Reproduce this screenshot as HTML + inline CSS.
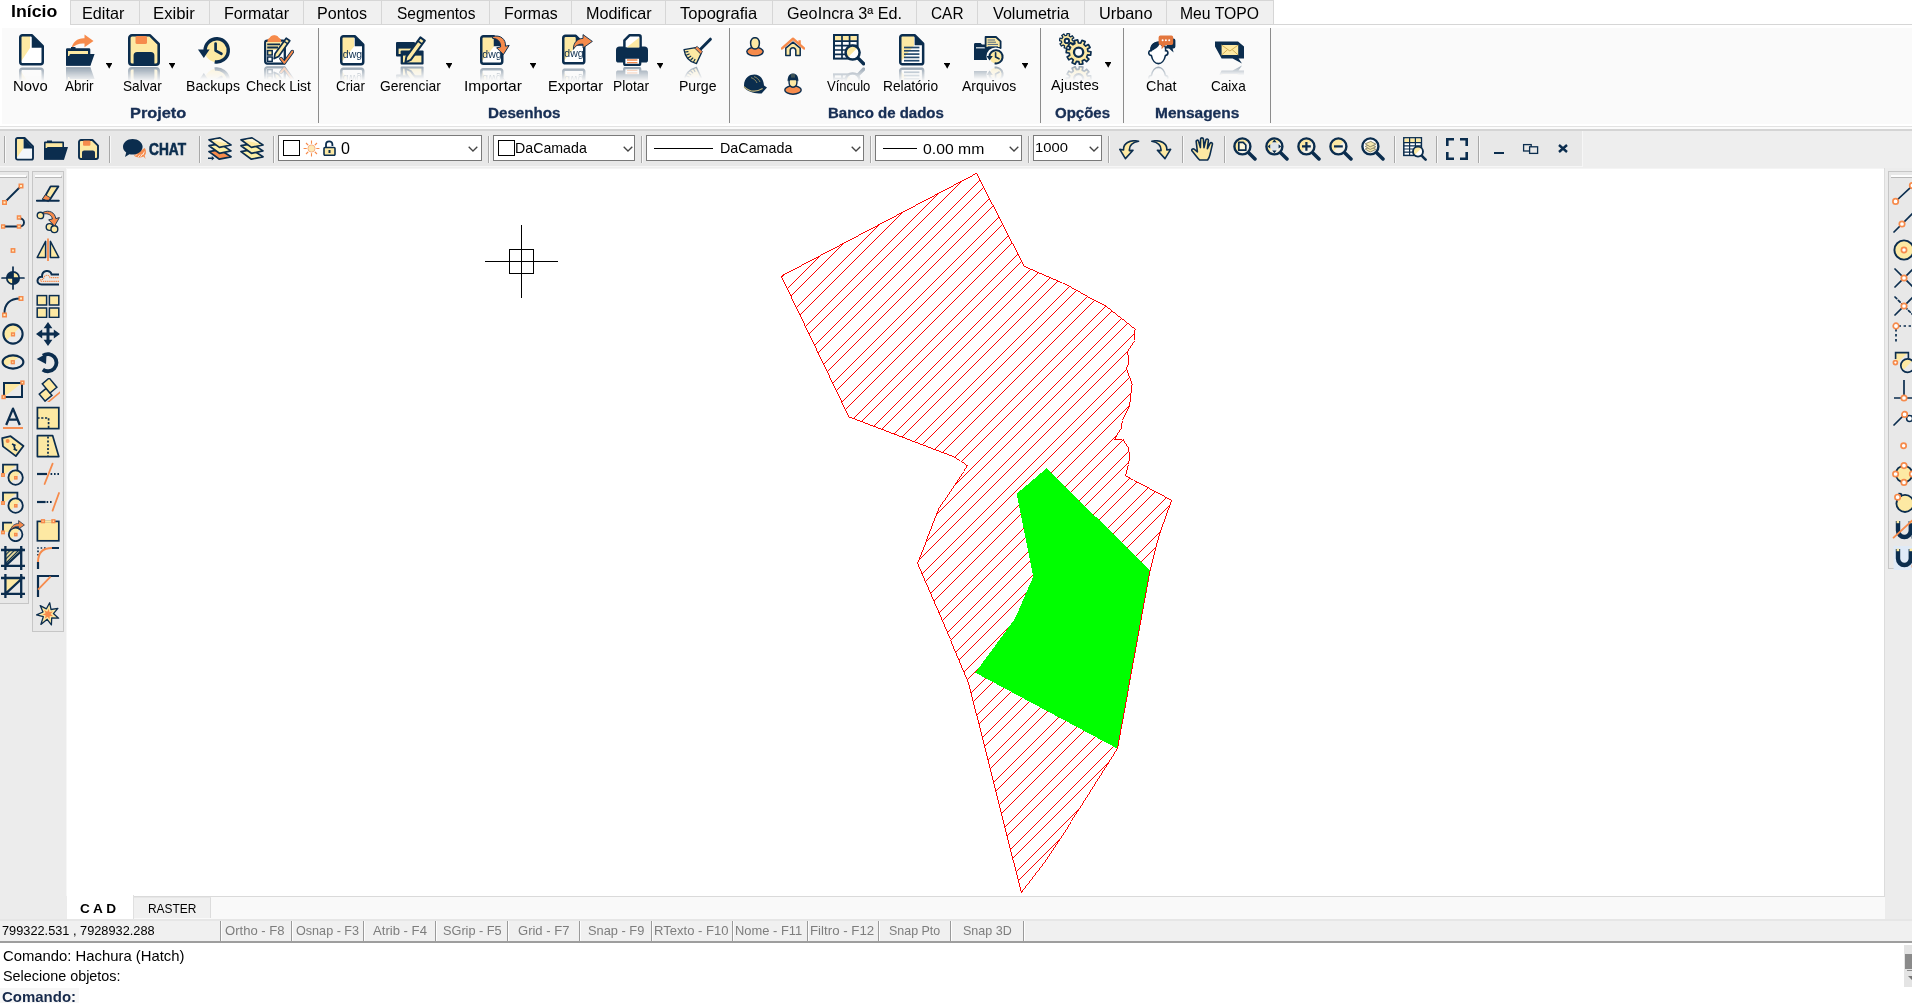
<!DOCTYPE html><html><head><meta charset="utf-8"><title>CAD</title><style>
*{box-sizing:border-box;margin:0;padding:0}
html,body{width:1912px;height:1003px;overflow:hidden;background:#fff}
body{position:relative;font-family:"Liberation Sans",sans-serif;color:#000}
.a{position:absolute}
.tab{position:absolute;top:0;height:25px;background:#f0f0f0;border:1px solid #d6d6d6;border-left:none;font-size:16px;line-height:25px;text-align:center;white-space:nowrap}
.tab span{display:inline-block;transform:scaleX(.95)}
.tab.act{background:#fff;border:none;font-weight:bold;height:27px}
.rib{position:absolute;left:2px;top:28px;width:1910px;height:96px;background:#fafafa}
.gsep{position:absolute;top:28px;width:1px;height:95px;background:#8c8c8c}
.lbl{position:absolute;top:77px;height:17px;line-height:17px;font-size:14px;white-space:nowrap;transform:translateX(-50%)}
.grp{position:absolute;top:103px;height:18px;line-height:18px;font-size:15px;font-weight:bold;color:#1b3358;white-space:nowrap;transform:translateX(-50%)}
.dd{position:absolute;width:7px;height:6px}
.ric{position:absolute;-webkit-box-reflect:below 1px linear-gradient(transparent 55%,rgba(0,0,0,.42))}
.tb{position:absolute;left:0;top:131px;width:1583px;height:36px;background:#e8e8e8;border-right:1px solid #f6f6f6;border-bottom:1px solid #f6f6f6}
.tsep{position:absolute;top:136px;width:2px;height:27px;border-left:1px solid #a8a8a8;border-right:1px solid #f8f8f8}
.cb{position:absolute;top:135px;height:26px;background:#fff;border:1px solid #7a7a7a;font-size:14.5px;line-height:24px;white-space:nowrap}
.chev{position:absolute;top:10px;width:10px;height:6px}
.ltb{position:absolute;background:#e8e8e8;border:1px solid #c6c6c6}
.grip{position:absolute;height:3px;border-top:2px solid #fdfdfd;border-bottom:1px solid #b8b8b8;border-right:1px solid #b8b8b8}
.st{position:absolute;top:921px;height:20px;line-height:20px;font-size:12.8px;color:#7d7d7d;text-align:center;border-left:1px solid #9a9a9a;box-shadow:inset 1px 0 0 #fff;white-space:nowrap}
.cmd{position:absolute;left:4px;font-size:14px;line-height:18px;white-space:nowrap}
</style></head><body>
<div class="tab act" style="left:0;width:70px"></div>
<div class="a" style="left:11.25px;top:1.03px;font-size:15.8px;line-height:21px;font-weight:bold;color:#000;white-space:nowrap;transform:scaleX(1.1221);transform-origin:0 0;">Início</div>
<div class="tab" style="left:70px;width:70px;border-left:1px solid #d6d6d6"></div>
<div class="a" style="left:82.40px;top:2.58px;font-size:16.5px;line-height:21px;color:#000;white-space:nowrap;transform:scaleX(0.9812);transform-origin:0 0;">Editar</div>
<div class="tab" style="left:140px;width:70px"></div>
<div class="a" style="left:153.27px;top:2.58px;font-size:16.5px;line-height:21px;color:#000;white-space:nowrap;transform:scaleX(1.0109);transform-origin:0 0;">Exibir</div>
<div class="tab" style="left:210px;width:94px"></div>
<div class="a" style="left:223.62px;top:2.58px;font-size:16.5px;line-height:21px;color:#000;white-space:nowrap;transform:scaleX(0.9721);transform-origin:0 0;">Formatar</div>
<div class="tab" style="left:304px;width:78px"></div>
<div class="a" style="left:317.41px;top:2.58px;font-size:16.5px;line-height:21px;color:#000;white-space:nowrap;transform:scaleX(0.9737);transform-origin:0 0;">Pontos</div>
<div class="tab" style="left:382px;width:108px"></div>
<div class="a" style="left:396.60px;top:2.58px;font-size:16.5px;line-height:21px;color:#000;white-space:nowrap;transform:scaleX(0.9407);transform-origin:0 0;">Segmentos</div>
<div class="tab" style="left:490px;width:82px"></div>
<div class="a" style="left:503.53px;top:2.58px;font-size:16.5px;line-height:21px;color:#000;white-space:nowrap;transform:scaleX(0.9604);transform-origin:0 0;">Formas</div>
<div class="tab" style="left:572px;width:94px"></div>
<div class="a" style="left:585.50px;top:2.58px;font-size:16.5px;line-height:21px;color:#000;white-space:nowrap;transform:scaleX(0.9813);transform-origin:0 0;">Modificar</div>
<div class="tab" style="left:666px;width:107px"></div>
<div class="a" style="left:680.47px;top:2.58px;font-size:16.5px;line-height:21px;color:#000;white-space:nowrap;transform:scaleX(1.0025);transform-origin:0 0;">Topografia</div>
<div class="tab" style="left:773px;width:144px"></div>
<div class="a" style="left:787.49px;top:2.58px;font-size:16.5px;line-height:21px;color:#000;white-space:nowrap;transform:scaleX(0.9822);transform-origin:0 0;">GeoIncra 3ª Ed.</div>
<div class="tab" style="left:917px;width:61px"></div>
<div class="a" style="left:931.13px;top:2.58px;font-size:16.5px;line-height:21px;color:#000;white-space:nowrap;transform:scaleX(0.9331);transform-origin:0 0;">CAR</div>
<div class="tab" style="left:978px;width:107px"></div>
<div class="a" style="left:993.10px;top:2.58px;font-size:16.5px;line-height:21px;color:#000;white-space:nowrap;transform:scaleX(0.9789);transform-origin:0 0;">Volumetria</div>
<div class="tab" style="left:1085px;width:82px"></div>
<div class="a" style="left:1098.68px;top:2.58px;font-size:16.5px;line-height:21px;color:#000;white-space:nowrap;transform:scaleX(0.9881);transform-origin:0 0;">Urbano</div>
<div class="tab" style="left:1167px;width:107px"></div>
<div class="a" style="left:1180.34px;top:2.58px;font-size:16.5px;line-height:21px;color:#000;white-space:nowrap;transform:scaleX(0.9534);transform-origin:0 0;">Meu TOPO</div>
<div class="a" style="left:70px;top:24px;width:1842px;height:1px;background:#d6d6d6"></div>
<div class="rib"></div>
<div class="a" style="left:12.71px;top:76.58px;font-size:14.2px;line-height:18px;color:#000;white-space:nowrap;transform:scaleX(1.0460);transform-origin:0 0;">Novo</div>
<div class="a" style="left:65.40px;top:76.58px;font-size:14.2px;line-height:18px;color:#000;white-space:nowrap;transform:scaleX(0.9557);transform-origin:0 0;">Abrir</div>
<div class="a" style="left:123.19px;top:76.58px;font-size:14.2px;line-height:18px;color:#000;white-space:nowrap;transform:scaleX(0.9618);transform-origin:0 0;">Salvar</div>
<div class="a" style="left:186.17px;top:76.58px;font-size:14.2px;line-height:18px;color:#000;white-space:nowrap;transform:scaleX(0.9920);transform-origin:0 0;">Backups</div>
<div class="a" style="left:246.40px;top:76.58px;font-size:14.2px;line-height:18px;color:#000;white-space:nowrap;transform:scaleX(0.9797);transform-origin:0 0;">Check List</div>
<div class="a" style="left:336.33px;top:76.58px;font-size:14.2px;line-height:18px;color:#000;white-space:nowrap;transform:scaleX(0.9434);transform-origin:0 0;">Criar</div>
<div class="a" style="left:380.31px;top:76.58px;font-size:14.2px;line-height:18px;color:#000;white-space:nowrap;transform:scaleX(0.9758);transform-origin:0 0;">Gerenciar</div>
<div class="a" style="left:464.30px;top:76.58px;font-size:14.2px;line-height:18px;color:#000;white-space:nowrap;transform:scaleX(1.0952);transform-origin:0 0;">Importar</div>
<div class="a" style="left:548.03px;top:76.58px;font-size:14.2px;line-height:18px;color:#000;white-space:nowrap;transform:scaleX(1.0262);transform-origin:0 0;">Exportar</div>
<div class="a" style="left:613.00px;top:76.58px;font-size:14.2px;line-height:18px;color:#000;white-space:nowrap;transform:scaleX(0.9725);transform-origin:0 0;">Plotar</div>
<div class="a" style="left:678.87px;top:76.58px;font-size:14.2px;line-height:18px;color:#000;white-space:nowrap;transform:scaleX(0.9906);transform-origin:0 0;">Purge</div>
<div class="a" style="left:826.80px;top:76.58px;font-size:14.2px;line-height:18px;color:#000;white-space:nowrap;transform:scaleX(0.9147);transform-origin:0 0;">Vínculo</div>
<div class="a" style="left:883.00px;top:76.58px;font-size:14.2px;line-height:18px;color:#000;white-space:nowrap;transform:scaleX(0.9692);transform-origin:0 0;">Relatório</div>
<div class="a" style="left:962.00px;top:76.58px;font-size:14.2px;line-height:18px;color:#000;white-space:nowrap;transform:scaleX(0.9846);transform-origin:0 0;">Arquivos</div>
<div class="a" style="left:1050.70px;top:75.58px;font-size:14.2px;line-height:18px;color:#000;white-space:nowrap;transform:scaleX(1.0265);transform-origin:0 0;">Ajustes</div>
<div class="a" style="left:1146.08px;top:76.58px;font-size:14.2px;line-height:18px;color:#000;white-space:nowrap;transform:scaleX(1.0153);transform-origin:0 0;">Chat</div>
<div class="a" style="left:1211.32px;top:76.58px;font-size:14.2px;line-height:18px;color:#000;white-space:nowrap;transform:scaleX(0.9567);transform-origin:0 0;">Caixa</div>
<div class="a" style="left:130.44px;top:103.75px;font-size:14px;line-height:18px;font-weight:bold;color:#182f55;white-space:nowrap;transform:scaleX(1.1659);transform-origin:0 0;-webkit-text-stroke:.3px #182f55;">Projeto</div>
<div class="a" style="left:487.71px;top:103.75px;font-size:14px;line-height:18px;font-weight:bold;color:#182f55;white-space:nowrap;transform:scaleX(1.0836);transform-origin:0 0;-webkit-text-stroke:.3px #182f55;">Desenhos</div>
<div class="a" style="left:827.52px;top:103.75px;font-size:14px;line-height:18px;font-weight:bold;color:#182f55;white-space:nowrap;transform:scaleX(1.0717);transform-origin:0 0;-webkit-text-stroke:.3px #182f55;">Banco de dados</div>
<div class="a" style="left:1055.10px;top:103.75px;font-size:14px;line-height:18px;font-weight:bold;color:#182f55;white-space:nowrap;transform:scaleX(1.0724);transform-origin:0 0;-webkit-text-stroke:.3px #182f55;">Opções</div>
<div class="a" style="left:1155.49px;top:103.75px;font-size:14px;line-height:18px;font-weight:bold;color:#182f55;white-space:nowrap;transform:scaleX(1.1052);transform-origin:0 0;-webkit-text-stroke:.3px #182f55;">Mensagens</div>
<div class="gsep" style="left:318px"></div>
<div class="gsep" style="left:729px"></div>
<div class="gsep" style="left:1040px"></div>
<div class="gsep" style="left:1123px"></div>
<div class="gsep" style="left:1270px"></div>
<svg class="a" style="left:105.5px;top:63px" width="6.4" height="5.8" viewBox="0 0 6.4 5.8"><path d="M0 0h6.4v1.2h-.7L3.2 5.7 .7 1.2H0z" fill="#000"/></svg>
<svg class="a" style="left:169px;top:63px" width="6.4" height="5.8" viewBox="0 0 6.4 5.8"><path d="M0 0h6.4v1.2h-.7L3.2 5.7 .7 1.2H0z" fill="#000"/></svg>
<svg class="a" style="left:445.7px;top:63px" width="6.4" height="5.8" viewBox="0 0 6.4 5.8"><path d="M0 0h6.4v1.2h-.7L3.2 5.7 .7 1.2H0z" fill="#000"/></svg>
<svg class="a" style="left:529.7px;top:63px" width="6.4" height="5.8" viewBox="0 0 6.4 5.8"><path d="M0 0h6.4v1.2h-.7L3.2 5.7 .7 1.2H0z" fill="#000"/></svg>
<svg class="a" style="left:656.9px;top:63px" width="6.4" height="5.8" viewBox="0 0 6.4 5.8"><path d="M0 0h6.4v1.2h-.7L3.2 5.7 .7 1.2H0z" fill="#000"/></svg>
<svg class="a" style="left:943.7px;top:63px" width="6.4" height="5.8" viewBox="0 0 6.4 5.8"><path d="M0 0h6.4v1.2h-.7L3.2 5.7 .7 1.2H0z" fill="#000"/></svg>
<svg class="a" style="left:1021.8px;top:63px" width="6.4" height="5.8" viewBox="0 0 6.4 5.8"><path d="M0 0h6.4v1.2h-.7L3.2 5.7 .7 1.2H0z" fill="#000"/></svg>
<svg class="a" style="left:1104.6px;top:62px" width="6.4" height="5.8" viewBox="0 0 6.4 5.8"><path d="M0 0h6.4v1.2h-.7L3.2 5.7 .7 1.2H0z" fill="#000"/></svg>
<svg class="ric" style="left:19px;top:34px" width="25" height="32" viewBox="0 0 25 32"><path d="M3.45 1.25H12.75L23.75 12.25V28.05a2.2 2.2 0 0 1-2.2 2.2H3.45a2.2 2.2 0 0 1-2.2-2.2V3.45a2.2 2.2 0 0 1 2.2-2.2z" fill="#fff"/><path d="M2 2H11V14L2 27.5z" fill="#fde9a3"/><path d="M12.75 1.25L23.75 12.25V13.75H12.75z" fill="#0b2d4e"/><path d="M3.45 1.25H12.75L23.75 12.25V28.05a2.2 2.2 0 0 1-2.2 2.2H3.45a2.2 2.2 0 0 1-2.2-2.2V3.45a2.2 2.2 0 0 1 2.2-2.2z" fill="none" stroke="#0b2d4e" stroke-width="2.5" stroke-linejoin="round"/></svg>
<svg class="ric" style="left:66px;top:34px" width="29" height="32" viewBox="0 0 29 32"><path d="M5.5 14.5C6.5 7.5 12 3.8 18.5 4.2V0.6L27.5 7l-9 6.2V9.6C13.5 9.2 9 10.6 5.5 14.5z" fill="#f68b4c"/><path d="M0 31.5V15.5a1.3 1.3 0 0 1 1.3-1.3H5v-1.3h4.5v1.3H23a1.3 1.3 0 0 1 1.3 1.3V31.5z" fill="#0b2d4e"/><path d="M2 17H22V22H2z" fill="#fde9a3"/><path d="M0 31.7L3.6 20.8a1 1 0 0 1 1-.7H28.6L24.4 31.7z" fill="#0b2d4e"/></svg>
<svg class="ric" style="left:128px;top:34px" width="32" height="32" viewBox="0 0 32 32"><path d="M4 1.3H22L30.7 10V28a2.7 2.7 0 0 1-2.7 2.7H4A2.7 2.7 0 0 1 1.3 28V4A2.7 2.7 0 0 1 4 1.3z" fill="#fde9a3" stroke="#0b2d4e" stroke-width="2.6" stroke-linejoin="round"/><rect x="7.5" y="2" width="11.5" height="8" rx="1.6" fill="#f68b4c"/><path d="M5.6 30.5V21.5a3.6 3.6 0 0 1 3.6-3.6H22.8a3.6 3.6 0 0 1 3.6 3.6V30.5z" fill="#0b2d4e"/></svg>
<svg class="ric" style="left:198px;top:36px" width="33" height="29" viewBox="0 0 33 29"><circle cx="18.7" cy="14.4" r="11.9" fill="#fde9a3"/><path d="M7.1 14.4A11.6 11.6 0 1 1 16.69 25.82" fill="none" stroke="#0b2d4e" stroke-width="3.4"/><path d="M0 13.4H11.6L5.8 22z" fill="#0b2d4e"/><path d="M17.6 7.6V14.6L23.4 17.8" fill="none" stroke="#0b2d4e" stroke-width="2.7" stroke-linecap="round" stroke-linejoin="round"/></svg>
<svg class="ric" style="left:264px;top:35px" width="30" height="30" viewBox="0 0 30 30"><path d="M6 2.6C7.5 -.6 13 -.6 14.5 2.6L17 4.6V8.2H3.6V4.6z" fill="#f68b4c"/><rect x="1.2" y="5.6" width="19.6" height="23" rx="2" fill="#fff" stroke="#0b2d4e" stroke-width="2.3"/><path d="M6 2.8C7.5 -.4 13 -.4 14.5 2.8L17 4.8V7H3.6V4.8z" fill="#f68b4c"/><path d="M2.4 7H19.6V15H2.4z" fill="#fde9a3"/><path d="M3.2 9.3H16M3.2 12.5H14" stroke="#0b2d4e" stroke-width="1.8"/><rect x="3.6" y="15.6" width="4.6" height="4.4" fill="#fde9a3" stroke="#0b2d4e" stroke-width="1.5"/><rect x="3.6" y="22" width="4.6" height="4.4" fill="#fff" stroke="#0b2d4e" stroke-width="1.5"/><path d="M22.2 3.2l3.6 2.6L14.6 21.4 10.2 23.6 11 18.8z" fill="#fde9a3" stroke="#0b2d4e" stroke-width="1.7" stroke-linejoin="round"/><path d="M20.2 6.4l3.4 2.4" stroke="#0b2d4e" stroke-width="1.4"/><path d="M17 23.6l3.4 4.2L28.4 16.6" fill="none" stroke="#0b2d4e" stroke-width="3.6" stroke-linecap="round" stroke-linejoin="round"/><path d="M17 23.6l3.4 4.2L28.4 16.6" fill="none" stroke="#f68b4c" stroke-width="1.9" stroke-linecap="round" stroke-linejoin="round"/></svg>
<svg class="ric" style="left:340px;top:35px" width="25" height="31" viewBox="0 0 25 31"><path d="M3.45 1.25H14.75L23.25 9.75V27.05a2.2 2.2 0 0 1-2.2 2.2H3.45a2.2 2.2 0 0 1-2.2-2.2V3.45a2.2 2.2 0 0 1 2.2-2.2z" fill="#fff"/><path d="M2 2H14V11.5L2 26.5z" fill="#fde9a3"/><path d="M14.75 1.25L23.25 9.75V11.25H14.75z" fill="#0b2d4e"/><path d="M3.45 1.25H14.75L23.25 9.75V27.05a2.2 2.2 0 0 1-2.2 2.2H3.45a2.2 2.2 0 0 1-2.2-2.2V3.45a2.2 2.2 0 0 1 2.2-2.2z" fill="none" stroke="#0b2d4e" stroke-width="2.5" stroke-linejoin="round"/><text x="12.45" y="23.3" text-anchor="middle" font-family="Liberation Sans" font-size="10.5" fill="#0b2d4e" letter-spacing="0">dwg</text></svg>
<svg class="ric" style="left:396px;top:36px" width="30" height="29" viewBox="0 0 30 29"><rect x="0" y="6" width="19" height="14.5" rx="1" fill="#0b2d4e"/><rect x="2.6" y="12.6" width="14" height="5.4" fill="#fde9a3"/><rect x="4.6" y="14.6" width="23" height="14" rx="1" fill="#0b2d4e"/><rect x="7" y="19.6" width="18.4" height="6.8" fill="#fde9a3"/><path d="M24.4 1.4l4.4 3.2L14.8 23.8 9.4 26.4 10.4 20.6z" fill="#fde9a3" stroke="#0b2d4e" stroke-width="2" stroke-linejoin="round"/><path d="M21.8 5l4.4 3.2" stroke="#0b2d4e" stroke-width="1.6"/></svg>
<svg class="ric" style="left:480px;top:34.5px" width="30" height="31" viewBox="0 0 30 31"><path d="M3.45 1.25H13.75L22.25 9.75V26.55a2.2 2.2 0 0 1-2.2 2.2H3.45a2.2 2.2 0 0 1-2.2-2.2V3.45a2.2 2.2 0 0 1 2.2-2.2z" fill="#fff"/><path d="M2 2H14V11.5L2 26z" fill="#fde9a3"/><path d="M13.75 1.25L22.25 9.75V11.25H13.75z" fill="#0b2d4e"/><path d="M3.45 1.25H13.75L22.25 9.75V26.55a2.2 2.2 0 0 1-2.2 2.2H3.45a2.2 2.2 0 0 1-2.2-2.2V3.45a2.2 2.2 0 0 1 2.2-2.2z" fill="none" stroke="#0b2d4e" stroke-width="2.5" stroke-linejoin="round"/><text x="11.95" y="22.8" text-anchor="middle" font-family="Liberation Sans" font-size="10.5" fill="#0b2d4e" letter-spacing="0">dwg</text><path d="M12.6 1.6C20.5 -0.8 26.2 4.6 25.4 11.2L29.2 10.4 23.4 19.6 16.6 12.8 20.6 12C21 6.6 17.4 3.4 12.6 3.4z" fill="#f68b4c" stroke="#0b2d4e" stroke-width="1" stroke-linejoin="round"/></svg>
<svg class="ric" style="left:561.6px;top:34px" width="31" height="32" viewBox="0 0 31 32"><g transform="translate(0 .6)"><path d="M3.45 1.25H13.75L22.25 9.75V26.55a2.2 2.2 0 0 1-2.2 2.2H3.45a2.2 2.2 0 0 1-2.2-2.2V3.45a2.2 2.2 0 0 1 2.2-2.2z" fill="#fff"/><path d="M2 2H14V11.5L2 26z" fill="#fde9a3"/><path d="M13.75 1.25L22.25 9.75V11.25H13.75z" fill="#0b2d4e"/><path d="M3.45 1.25H13.75L22.25 9.75V26.55a2.2 2.2 0 0 1-2.2 2.2H3.45a2.2 2.2 0 0 1-2.2-2.2V3.45a2.2 2.2 0 0 1 2.2-2.2z" fill="none" stroke="#0b2d4e" stroke-width="2.5" stroke-linejoin="round"/><text x="11.95" y="22.8" text-anchor="middle" font-family="Liberation Sans" font-size="10.5" fill="#0b2d4e" letter-spacing="0">dwg</text></g><path d="M11.4 15.4C11.2 8.6 15.4 4.6 21 4.4V.6L30.4 7.4 21 14V10.2C16.6 9.8 13.4 11.6 11.4 15.4z" fill="#f68b4c" stroke="#0b2d4e" stroke-width=".9" stroke-linejoin="round"/></svg>
<svg class="ric" style="left:616px;top:34px" width="32" height="32" viewBox="0 0 32 32"><path d="M3.6 12.6H28.4a3.6 3.6 0 0 1 3.6 3.6V26a2.6 2.6 0 0 1-2.6 2.6H2.6A2.6 2.6 0 0 1 0 26V16.2a3.6 3.6 0 0 1 3.6-3.6z" fill="#0b2d4e"/><path d="M13.4 1.3H23a1.6 1.6 0 0 1 1.6 1.6V14.6H8.4V6.3z" fill="#fff" stroke="#0b2d4e" stroke-width="2.5" stroke-linejoin="round"/><path d="M23.2 3.4V13.6H10.6z" fill="#fde9a3"/><rect x="8.2" y="23.6" width="16" height="7.4" rx="1.2" fill="#fff" stroke="#0b2d4e" stroke-width="2.3"/><path d="M11 26H21.4M11 28.6H21.4" stroke="#f68b4c" stroke-width="1.3"/></svg>
<svg class="ric" style="left:683px;top:37px" width="30" height="28" viewBox="0 0 30 28"><path d="M27.4 2.2L17 12.8" stroke="#0b2d4e" stroke-width="3" stroke-linecap="round"/><path d="M12.6 10.6L1 12.6C2 19.8 6.6 25 13.4 26.6L18.2 16.4z" fill="#fde9a3" stroke="#0b2d4e" stroke-width="1.3" stroke-linejoin="round"/><path d="M2.4 15l2.6-.4M3.6 18l2.6-1M5.4 20.8l2.4-1.6M7.8 23l2-2M10.6 24.8l1.4-2.4" stroke="#0b2d4e" stroke-width="1.1" stroke-linecap="round"/><path d="M14.2 9.4L19.4 14.6 17.8 17.2 11.6 11z" fill="#f68b4c" stroke="#0b2d4e" stroke-width=".8" stroke-linejoin="round"/></svg>
<svg class="a" style="left:746px;top:36.6px" width="18" height="20" viewBox="0 0 18 20"><ellipse cx="9" cy="14.6" rx="8.2" ry="4.3" fill="#f68b4c" stroke="#0b2d4e" stroke-width="1.4"/><path d="M4.6 6.2C4.6 -1.2 13.4 -1.2 13.4 6.2C13.4 9.6 11.6 12 9 12S4.6 9.600000000000001 4.6 6.2z" fill="#fde9a3" stroke="#0b2d4e" stroke-width="1.5"/></svg>
<svg class="a" style="left:781px;top:36.6px" width="24" height="20" viewBox="0 0 24 20"><path d="M17.4 3.2h2.4v4.6l-2.4-2z" fill="#f68b4c"/><path d="M1 11.4L12 1.8 23 11.4" fill="none" stroke="#f68b4c" stroke-width="2.5" stroke-linecap="round" stroke-linejoin="round"/><path d="M4.8 18.4V11.2L12 5.2l7.2 6V18.400000000000002H14.8V13.6a2.8 2.8 0 0 0-5.6 0V18.4z" fill="#fde9a3" stroke="#0b2d4e" stroke-width="1.5" stroke-linejoin="round"/></svg>
<svg class="a" style="left:743px;top:73.6px" width="25" height="20" viewBox="0 0 25 20"><path d="M1 11.6C1 3.6 7 .6 11.4 .6 17.6 .6 20.6 5.6 21 11.6L24 13.6 18.6 19.400000000000002C11.6 20.2 4.6 17.6 1 13.6z" fill="#0b2d4e"/><path d="M1 12.6C6 17.6 13 18.400000000000002 19.6 14.6" fill="none" stroke="#c9b97d" stroke-width="1.2"/><path d="M8 3.6C11 4.6 13 6.6 14 9M11 2.6C14 3.6 16 5.6 17 8" fill="none" stroke="#8c8a64" stroke-width="1"/></svg>
<svg class="a" style="left:784px;top:73px" width="18" height="22" viewBox="0 0 18 22"><ellipse cx="9" cy="17" rx="8.2" ry="4.2" fill="#f68b4c" stroke="#0b2d4e" stroke-width="1.4"/><path d="M5 8.6C5 4.6 13 4.6 13 8.6C13 12 11.4 14.2 9 14.2S5 12 5 8.6z" fill="#fde9a3" stroke="#0b2d4e" stroke-width="1.4"/><path d="M3.6 8.2C3.6 2.8 6 .6 9 .6S14.4 2.8 14.4 8.2L12.4 7.2H5.6z" fill="#0b2d4e"/><path d="M8 1v3.6M10 1v3.6" stroke="#8c8a64" stroke-width=".8"/></svg>
<svg class="ric" style="left:833px;top:34px" width="32" height="32" viewBox="0 0 32 32"><rect x="1" y="1" width="23.6" height="23.6" fill="#fff" stroke="#0b2d4e" stroke-width="2"/><rect x="2" y="2" width="21.6" height="4.6" fill="#fde9a3"/><path d="M1 7.2H24.6M1 11.6H24.6M1 16H24.6M1 20.4H24.6" stroke="#0b2d4e" stroke-width="1.7"/><path d="M9 1V24.6M16.6 1V24.6" stroke="#0b2d4e" stroke-width="1.7"/><path d="M24.6 23.6L30.6 29.8" stroke="#0b2d4e" stroke-width="3.4" stroke-linecap="round"/><circle cx="19.6" cy="18.6" r="7" fill="#fff"/><path d="M12.6 18.6A7 7 0 0 1 24.55 13.65L14.65 23.55A7 7 0 0 1 12.6 18.6z" fill="#fde9a3"/><circle cx="19.6" cy="18.6" r="7" fill="none" stroke="#0b2d4e" stroke-width="2.5"/></svg>
<svg class="ric" style="left:899px;top:34px" width="26" height="32" viewBox="0 0 26 32"><path d="M3.45 1.25H15.649999999999999L24.15 9.75V28.150000000000002a2.2 2.2 0 0 1-2.2 2.2H3.45a2.2 2.2 0 0 1-2.2-2.2V3.45a2.2 2.2 0 0 1 2.2-2.2z" fill="#fff"/><path d="M2 2H15V11.5L2 27.6z" fill="#fde9a3"/><path d="M5 13.5H20.4" stroke="#244a6e" stroke-width="1.7"/><path d="M5 16.8H20.4" stroke="#244a6e" stroke-width="1.7"/><path d="M5 20.1H20.4" stroke="#244a6e" stroke-width="1.7"/><path d="M5 23.4H20.4" stroke="#244a6e" stroke-width="1.7"/><path d="M5 26.7H20.4" stroke="#244a6e" stroke-width="1.7"/><path d="M15.649999999999999 1.25L24.15 9.75V11.25H15.649999999999999z" fill="#0b2d4e"/><path d="M3.45 1.25H15.649999999999999L24.15 9.75V28.150000000000002a2.2 2.2 0 0 1-2.2 2.2H3.45a2.2 2.2 0 0 1-2.2-2.2V3.45a2.2 2.2 0 0 1 2.2-2.2z" fill="none" stroke="#0b2d4e" stroke-width="2.5" stroke-linejoin="round"/></svg>
<svg class="ric" style="left:974px;top:35.6px" width="30" height="29" viewBox="0 0 30 29"><path d="M0 24V8.4a1.4 1.4 0 0 1 1.4-1.4H6.6L8 8.6H19.6V24z" fill="#0b2d4e"/><path d="M2 11.2H14V12.4H2z" fill="#e9eef3"/><path d="M11.6 1H22L26.6 5.4V12H11.6z" fill="#fde9a3" stroke="#0b2d4e" stroke-width="1.8" stroke-linejoin="round"/><path d="M13.6 4H21M13.6 6.2H22M13.600000000000001 8.4H24M13.6 10.6H24" stroke="#4b6582" stroke-width="1"/><circle cx="21.6" cy="20.6" r="9.2" fill="#fafafa"/><circle cx="22" cy="20.8" r="6.6" fill="#fde9a3"/><path d="M15.4 20.8A6.6 6.6 0 1 1 20.6 27.25" fill="none" stroke="#0b2d4e" stroke-width="2"/><path d="M12.4 20H18.8L15.6 24.6z" fill="#0b2d4e"/><path d="M21.6 16.8V21L25 22.8" fill="none" stroke="#0b2d4e" stroke-width="1.6" stroke-linecap="round"/></svg>
<svg class="ric" style="left:1058.6px;top:32.6px" width="33" height="32" viewBox="0 0 33 32"><path d="M15.40 8.10L14.88 10.63L12.89 10.22L11.93 11.65L13.06 13.35L10.91 14.77L9.78 13.07L8.10 13.40L7.70 15.40L5.17 14.88L5.58 12.89L4.15 11.93L2.45 13.06L1.03 10.91L2.73 9.78L2.40 8.10L0.40 7.70L0.92 5.17L2.91 5.58L3.87 4.15L2.74 2.45L4.89 1.03L6.02 2.73L7.70 2.40L8.10 0.40L10.63 0.92L10.22 2.91L11.65 3.87L13.35 2.74L14.77 4.89L13.07 6.02L13.40 7.70z" fill="#fde9a3" stroke="#0b2d4e" stroke-width="1.3" stroke-linejoin="round"/><circle cx="7.9" cy="7.9" r="2.2" fill="#fafafa" stroke="#0b2d4e" stroke-width="1.9"/><path d="M31.99 18.73L31.65 22.13L28.61 21.87L27.66 24.03L29.90 26.10L27.63 28.65L25.32 26.66L23.28 27.85L23.88 30.84L20.54 31.56L19.84 28.60L17.50 28.36L16.22 31.13L13.09 29.76L14.27 26.94L12.51 25.38L9.85 26.87L8.13 23.92L10.74 22.33L10.24 20.03L7.21 19.67L7.55 16.27L10.59 16.53L11.54 14.37L9.30 12.30L11.57 9.75L13.88 11.74L15.92 10.55L15.32 7.56L18.66 6.84L19.36 9.80L21.70 10.04L22.98 7.27L26.11 8.64L24.93 11.46L26.69 13.02L29.35 11.53L31.07 14.48L28.46 16.07L28.96 18.37z" fill="#fde9a3" stroke="#0b2d4e" stroke-width="1.7" stroke-linejoin="round"/><circle cx="19.6" cy="19.2" r="4.6" fill="#fafafa" stroke="#0b2d4e" stroke-width="2.3"/></svg>
<svg class="ric" style="left:1148px;top:34.6px" width="28" height="30" viewBox="0 0 28 30"><path d="M22.6 3.6H25.4a2 2 0 0 1 2 2V11.6a2 2 0 0 1-2 2H24.6L25.6 17.6 21 13.600000000000001H17z" fill="#0b2d4e"/><path d="M3.4 20.6C-0.6 19.6 0.4 15.6 3 15.6C2.4 9.6 8 6.6 12.4 7.6C15.4 8.2 18 11 17.6 15.6C20.4 15.6 21 19.6 17.4 20.6C16.4 25.6 13.4 28.6 10.4 28.6S4.4 25.6 3.4 20.6z" fill="#fff" stroke="#0b2d4e" stroke-width="1.6"/><path d="M2.6 16.6C1.4 9.6 6.4 6 11.4 6.6C14 7 16.6 8.6 17.6 11.6C14.6 11.6 12.6 10.6 11.6 9C10.6 12 6.6 14.6 2.6 16.6z" fill="#0b2d4e"/><path d="M12.4 .6H23.4a1.8 1.8 0 0 1 1.8 1.8V8.2a1.8 1.8 0 0 1-1.8 1.8H17.6L13.600000000000001 14.2V10H12.4a1.8 1.8 0 0 1-1.8-1.8V2.4A1.8 1.8 0 0 1 12.4 .6z" fill="#e3763d"/><circle cx="14.6" cy="5.3" r="1" fill="#fff"/><circle cx="17.9" cy="5.3" r="1" fill="#fff"/><circle cx="21.2" cy="5.3" r="1" fill="#fff"/></svg>
<svg class="ric" style="left:1215px;top:41px" width="29" height="23" viewBox="0 0 29 23"><path d="M0 .6H23L29 5.6V17.6H23.6L27 22.6 17.6 17.6H6.6L0 5.6z" fill="#0b2d4e"/><rect x="6.6" y="4" width="16.6" height="10" fill="#fde9a3"/><path d="M6.6 4L14.9 10 23.200000000000003 4M6.6 14L12.6 8.6M23.2 14L17.2 8.6" fill="none" stroke="#c9a74e" stroke-width=".9"/></svg>
<div class="a" style="left:0;top:126px;width:1912px;height:1px;background:#e2e2e2"></div>
<div class="a" style="left:0;top:127px;width:1912px;height:2px;background:#fbfbfb"></div>
<div class="a" style="left:0;top:129px;width:1912px;height:2px;background:#d4d4d4"></div>
<div class="a" style="left:0;top:131px;width:1912px;height:38px;background:#eeeeee"></div>
<div class="a" style="left:0;top:168px;width:67px;height:753px;background:#ececec"></div>
<div class="a" style="left:1884px;top:168px;width:28px;height:753px;background:#ececec"></div>
<div class="a" style="left:66px;top:168px;width:1819px;height:1px;background:#f4f4f4"></div>
<div class="a" style="left:66px;top:168px;width:1px;height:728px;background:#f6f6f6"></div>
<div class="a" style="left:1884px;top:168px;width:1px;height:728px;background:#dcdcdc"></div>
<div class="a" style="left:67px;top:896px;width:1818px;height:23px;background:#f9f9f9;border-top:1px solid #dadada"></div>
<div class="a" style="left:67px;top:895px;width:67px;height:24px;background:#fff;border-right:1px solid #e0e0e0"></div>
<div class="a" style="left:134px;top:897px;width:77px;height:21px;background:#f0f0f0;border-right:1px solid #dcdcdc;border-top:1px solid #e6e6e6"></div>
<div class="a" style="left:80.46px;top:901.27px;font-size:12.5px;line-height:16px;font-weight:bold;color:#000;white-space:nowrap;transform:scaleX(1.0895);transform-origin:0 0;">C A D</div>
<div class="a" style="left:148.04px;top:900.63px;font-size:12.6px;line-height:16px;color:#000;white-space:nowrap;transform:scaleX(0.9479);transform-origin:0 0;">RASTER</div>
<div class="a" style="left:0;top:919px;width:1912px;height:2px;background:#e6e6e6"></div>
<div class="a" style="left:0;top:921px;width:1912px;height:20px;background:#f0f0f0"></div>
<div class="a" style="left:0;top:941px;width:1912px;height:2px;background:#9e9e9e"></div>
<div class="a" style="left:2.36px;top:922.83px;font-size:12.6px;line-height:16px;color:#000;white-space:nowrap;transform:scaleX(1.0134);transform-origin:0 0;">799322.531 , 7928932.288</div>
<div class="a" style="left:220px;top:921px;width:2px;height:20px;border-left:1px solid #9a9a9a;border-right:1px solid #fdfdfd"></div>
<div class="a" style="left:291px;top:921px;width:2px;height:20px;border-left:1px solid #9a9a9a;border-right:1px solid #fdfdfd"></div>
<div class="a" style="left:363px;top:921px;width:2px;height:20px;border-left:1px solid #9a9a9a;border-right:1px solid #fdfdfd"></div>
<div class="a" style="left:435px;top:921px;width:2px;height:20px;border-left:1px solid #9a9a9a;border-right:1px solid #fdfdfd"></div>
<div class="a" style="left:507px;top:921px;width:2px;height:20px;border-left:1px solid #9a9a9a;border-right:1px solid #fdfdfd"></div>
<div class="a" style="left:579px;top:921px;width:2px;height:20px;border-left:1px solid #9a9a9a;border-right:1px solid #fdfdfd"></div>
<div class="a" style="left:651px;top:921px;width:2px;height:20px;border-left:1px solid #9a9a9a;border-right:1px solid #fdfdfd"></div>
<div class="a" style="left:732px;top:921px;width:2px;height:20px;border-left:1px solid #9a9a9a;border-right:1px solid #fdfdfd"></div>
<div class="a" style="left:807px;top:921px;width:2px;height:20px;border-left:1px solid #9a9a9a;border-right:1px solid #fdfdfd"></div>
<div class="a" style="left:878px;top:921px;width:2px;height:20px;border-left:1px solid #9a9a9a;border-right:1px solid #fdfdfd"></div>
<div class="a" style="left:950px;top:921px;width:2px;height:20px;border-left:1px solid #9a9a9a;border-right:1px solid #fdfdfd"></div>
<div class="a" style="left:1023px;top:921px;width:2px;height:20px;border-left:1px solid #9a9a9a;border-right:1px solid #fdfdfd"></div>
<div class="a" style="left:225.41px;top:922.83px;font-size:12.6px;line-height:16px;color:#7d7d7d;white-space:nowrap;transform:scaleX(1.0387);transform-origin:0 0;">Ortho - F8</div>
<div class="a" style="left:295.63px;top:922.83px;font-size:12.6px;line-height:16px;color:#7d7d7d;white-space:nowrap;transform:scaleX(1.0011);transform-origin:0 0;">Osnap - F3</div>
<div class="a" style="left:373.20px;top:922.83px;font-size:12.6px;line-height:16px;color:#7d7d7d;white-space:nowrap;transform:scaleX(1.0414);transform-origin:0 0;">Atrib - F4</div>
<div class="a" style="left:442.93px;top:922.83px;font-size:12.6px;line-height:16px;color:#7d7d7d;white-space:nowrap;transform:scaleX(1.0103);transform-origin:0 0;">SGrip - F5</div>
<div class="a" style="left:518.15px;top:922.83px;font-size:12.6px;line-height:16px;color:#7d7d7d;white-space:nowrap;transform:scaleX(1.0348);transform-origin:0 0;">Grid - F7</div>
<div class="a" style="left:587.92px;top:922.83px;font-size:12.6px;line-height:16px;color:#7d7d7d;white-space:nowrap;transform:scaleX(1.0188);transform-origin:0 0;">Snap - F9</div>
<div class="a" style="left:654.36px;top:922.83px;font-size:12.6px;line-height:16px;color:#7d7d7d;white-space:nowrap;transform:scaleX(1.0364);transform-origin:0 0;">RTexto - F10</div>
<div class="a" style="left:735.37px;top:922.83px;font-size:12.6px;line-height:16px;color:#7d7d7d;white-space:nowrap;transform:scaleX(1.0249);transform-origin:0 0;">Nome - F11</div>
<div class="a" style="left:809.94px;top:922.83px;font-size:12.6px;line-height:16px;color:#7d7d7d;white-space:nowrap;transform:scaleX(1.0548);transform-origin:0 0;">Filtro - F12</div>
<div class="a" style="left:889.14px;top:922.83px;font-size:12.6px;line-height:16px;color:#7d7d7d;white-space:nowrap;transform:scaleX(0.9886);transform-origin:0 0;">Snap Pto</div>
<div class="a" style="left:962.74px;top:922.83px;font-size:12.6px;line-height:16px;color:#7d7d7d;white-space:nowrap;transform:scaleX(0.9942);transform-origin:0 0;">Snap 3D</div>
<div class="a" style="left:2.76px;top:947.48px;font-size:14.2px;line-height:18px;color:#000;white-space:nowrap;transform:scaleX(1.0459);transform-origin:0 0;">Comando: Hachura (Hatch)</div>
<div class="a" style="left:2.85px;top:967.38px;font-size:14.2px;line-height:18px;color:#000;white-space:nowrap;transform:scaleX(1.0134);transform-origin:0 0;">Selecione objetos:</div>
<div class="a" style="left:0;top:988px;width:79px;height:15px;background:#f7f7f7"></div>
<div class="a" style="left:1.90px;top:988.15px;font-size:14px;line-height:18px;font-weight:bold;color:#16294a;white-space:nowrap;transform:scaleX(1.0692);transform-origin:0 0;">Comando:</div>
<div class="a" style="left:1904px;top:945px;width:8px;height:42px;background:#e4e4e4"></div>
<div class="a" style="left:1905px;top:954px;width:7px;height:15px;background:#8a8a8a"></div>
<div class="a" style="left:1907px;top:970px;width:5px;height:1px;background:#8a8a8a"></div>
<svg class="a" style="left:1907px;top:976px" width="5" height="4" viewBox="0 0 5 4"><path d="M1 0h4v4z" fill="#777"/></svg>
<div class="tb"></div>
<div class="tsep" style="left:4px"></div>
<div class="tsep" style="left:109px"></div>
<div class="tsep" style="left:199px"></div>
<div class="tsep" style="left:273px"></div>
<div class="tsep" style="left:488px"></div>
<div class="tsep" style="left:641px"></div>
<div class="tsep" style="left:870px"></div>
<div class="tsep" style="left:1028px"></div>
<div class="tsep" style="left:1108px"></div>
<div class="tsep" style="left:1182px"></div>
<div class="tsep" style="left:1224px"></div>
<div class="tsep" style="left:1394px"></div>
<div class="tsep" style="left:1436px"></div>
<div class="tsep" style="left:1478px"></div>
<div class="cb" style="left:278px;width:204px"></div>
<div class="cb" style="left:493px;width:142px"></div>
<div class="cb" style="left:646px;width:218px"></div>
<div class="cb" style="left:875px;width:147px"></div>
<div class="cb" style="left:1033px;width:69px"></div>
<div class="a" style="left:283px;top:140px;width:17px;height:16px;border:1px solid #000;background:#fff"></div>
<div class="a" style="left:498px;top:140px;width:17px;height:16px;border:1px solid #000;background:#fff"></div>
<svg class="a" style="left:302.5px;top:139.5px" width="17" height="17" viewBox="0 0 17 17"><g stroke="#f68b4c" stroke-width="1.1"><path d="M8.5 .6v15.8M.6 8.5h15.8M3 3l11 11M14 3l-11 11"/></g><circle cx="8.5" cy="8.5" r="4.8" fill="#fff"/><circle cx="8.5" cy="8.5" r="3.6" fill="#fde8b4" stroke="#f8b285" stroke-width="1"/></svg>
<svg class="a" style="left:322.5px;top:140px" width="13" height="16" viewBox="0 0 13 16"><path d="M3 8V4.5a3.2 3.2 0 0 1 6.4 0V6" fill="none" stroke="#0b2d4e" stroke-width="1.8"/><rect x="1" y="7.5" width="11" height="7.8" rx="1" fill="#fde9a3" stroke="#0b2d4e" stroke-width="1.6"/><path d="M6.5 10v3" stroke="#0b2d4e" stroke-width="2"/></svg>
<div class="a" style="left:341.04px;top:138.48px;font-size:16.5px;line-height:21px;color:#000;white-space:nowrap;transform:scaleX(0.9747);transform-origin:0 0;">0</div>
<div class="a" style="left:515.36px;top:138.30px;font-size:15px;line-height:20px;color:#000;white-space:nowrap;transform:scaleX(0.9465);transform-origin:0 0;">DaCamada</div>
<div class="a" style="left:720.05px;top:138.30px;font-size:15px;line-height:20px;color:#000;white-space:nowrap;transform:scaleX(0.9545);transform-origin:0 0;">DaCamada</div>
<div class="a" style="left:923.45px;top:138.60px;font-size:15px;line-height:20px;color:#000;white-space:nowrap;transform:scaleX(1.0501);transform-origin:0 0;">0.00 mm</div>
<div class="a" style="left:1035.39px;top:138.86px;font-size:13.4px;line-height:17px;color:#000;white-space:nowrap;transform:scaleX(1.1044);transform-origin:0 0;">1000</div>
<div class="a" style="left:654px;top:148px;width:59px;height:1px;background:#000"></div>
<div class="a" style="left:883px;top:148px;width:34px;height:1px;background:#000"></div>
<svg class="a" style="left:468px;top:146px" width="10" height="6" viewBox="0 0 10 6"><path d="M.7.7L5 5 9.3.7" fill="none" stroke="#444" stroke-width="1.3"/></svg>
<svg class="a" style="left:623px;top:146px" width="10" height="6" viewBox="0 0 10 6"><path d="M.7.7L5 5 9.3.7" fill="none" stroke="#444" stroke-width="1.3"/></svg>
<svg class="a" style="left:851px;top:146px" width="10" height="6" viewBox="0 0 10 6"><path d="M.7.7L5 5 9.3.7" fill="none" stroke="#444" stroke-width="1.3"/></svg>
<svg class="a" style="left:1009px;top:146px" width="10" height="6" viewBox="0 0 10 6"><path d="M.7.7L5 5 9.3.7" fill="none" stroke="#444" stroke-width="1.3"/></svg>
<svg class="a" style="left:1089px;top:146px" width="10" height="6" viewBox="0 0 10 6"><path d="M.7.7L5 5 9.3.7" fill="none" stroke="#444" stroke-width="1.3"/></svg>
<div class="a" style="left:149.25px;top:139.79px;font-size:15.6px;line-height:20px;font-weight:bold;color:#0b2d4e;white-space:nowrap;transform:scaleX(0.8788);transform-origin:0 0;-webkit-text-stroke:.6px #0b2d4e;">CHAT</div>
<div class="a" style="left:1494px;top:152px;width:10px;height:2px;background:#0b2d4e"></div>
<svg class="a" style="left:1522px;top:143px" width="17" height="12" viewBox="0 0 17 12"><rect x="1.6" y="1.6" width="7.6" height="6.4" fill="none" stroke="#0b2d4e" stroke-width="1.3"/><rect x="7.6" y="3.8" width="8" height="6.6" fill="#e8e8e8" stroke="#0b2d4e" stroke-width="1.3"/></svg>
<svg class="a" style="left:1558px;top:144px" width="10" height="9" viewBox="0 0 10 9"><path d="M1 1l8 7M9 1L1 8" stroke="#0b2d4e" stroke-width="2.4"/></svg>
<svg class="a" style="left:15px;top:137px" width="19" height="24" viewBox="0 0 19 24"><path d="M2.6 1H9.6L18 9.4V21a1.6 1.6 0 0 1-1.6 1.6H2.6A1.6 1.6 0 0 1 1 21V2.6A1.6 1.6 0 0 1 2.6 1z" fill="#f2f7fb"/><path d="M1.6 1.6H8.6V11L1.6 21z" fill="#fde9a3"/><path d="M8.6 1L18 10.4V11.6H8.6z" fill="#0b2d4e"/><path d="M2.6 1H9.6L18 9.4V21a1.6 1.6 0 0 1-1.6 1.6H2.6A1.6 1.6 0 0 1 1 21V2.6A1.6 1.6 0 0 1 2.6 1z" fill="none" stroke="#0b2d4e" stroke-width="1.9" stroke-linejoin="round"/></svg>
<svg class="a" style="left:44px;top:140px" width="24" height="20" viewBox="0 0 24 20"><path d="M0 19.6V2.4A1 1 0 0 1 1 1.4H3V.4H8V1.4H19a1 1 0 0 1 1 1V19.6z" fill="#0b2d4e"/><path d="M1.6 3.2H18.4V8H1.6z" fill="#fde9a3"/><path d="M0 19.8L3 7.6a1 1 0 0 1 1-.7H24L20 19.8z" fill="#0b2d4e"/></svg>
<svg class="a" style="left:78px;top:139.4px" width="21" height="21" viewBox="0 0 21 21"><path d="M3 1H14.4L20 6.6V18a2 2 0 0 1-2 2H3A2 2 0 0 1 1 18V3A2 2 0 0 1 3 1z" fill="#fde9a3" stroke="#0b2d4e" stroke-width="1.9" stroke-linejoin="round"/><rect x="5" y="1.4" width="7.4" height="5.4" rx="1" fill="#f68b4c"/><path d="M4 19.8V13.6a2.2 2.2 0 0 1 2.2-2.2H14.8a2.2 2.2 0 0 1 2.2 2.2V19.8z" fill="#17314f"/></svg>
<svg class="a" style="left:122.6px;top:139px" width="23" height="20" viewBox="0 0 23 20"><path d="M11 16.6C13.6 19 17.6 19 20.6 17.6L22.6 20 21.6 16.6C23.6 14.6 23.2 11 21.6 9" fill="#f68b4c"/><path d="M12.6 16.8l1.6-1.6M15 18l2-2.400000000000002M17.6 17.8l2-3M19.8 16l1.6-3.4" stroke="#fff" stroke-width=".8"/><path d="M9.6 0C15 0 19.6 3.4 19.6 7.8S15 15.6 9.6 15.6C8.6 15.6 7.4 15.4 6.4 15.2L2 18 3.2 13.6C1.2 12.2 0 10 0 7.8 0 3.4 4.2 0 9.6 0z" fill="#0b2d4e"/></svg>
<svg class="a" style="left:207.8px;top:137px" width="24" height="24" viewBox="0 0 24 24"><path d="M1 14.600000000000001L12 12.700000000000001 23 19.8 11.4 22.200000000000003z" fill="#f68b4c" stroke="#0b2d4e" stroke-width="1.7" stroke-linejoin="round"/><path d="M1 8.7L12 6.800000000000001 23 13.9 11.4 16.3z" fill="#fdf0a6" stroke="#0b2d4e" stroke-width="1.7" stroke-linejoin="round"/><path d="M1 2.8L12 0.9 23 8 11.4 10.4z" fill="#fde9a3" stroke="#0b2d4e" stroke-width="1.7" stroke-linejoin="round"/><path d="M3.6 3.2L12 1.8 19.6 6.6z" fill="#fff6d8"/><path d="M0 20.6H3.8V19L6.4 21.2 3.8 23.4V22H0z" fill="#0b2d4e"/></svg>
<svg class="a" style="left:240px;top:137px" width="24" height="24" viewBox="0 0 24 24"><path d="M1 14.600000000000001L12 12.700000000000001 23 19.8 11.4 22.200000000000003z" fill="#fdf0a6" stroke="#0b2d4e" stroke-width="1.7" stroke-linejoin="round"/><path d="M1 8.7L12 6.800000000000001 23 13.9 11.4 16.3z" fill="#fdf0a6" stroke="#0b2d4e" stroke-width="1.7" stroke-linejoin="round"/><path d="M1 2.8L12 0.9 23 8 11.4 10.4z" fill="#fde9a3" stroke="#0b2d4e" stroke-width="1.7" stroke-linejoin="round"/><path d="M3.6 3.2L12 1.8 19.6 6.6z" fill="#fff6d8"/></svg>
<svg class="a" style="left:1119px;top:140px" width="21" height="19.5" viewBox="0 0 21 19.5"><path d="M19.6 1.2C13 2.4 10 6 10.4 10.6L14 10.2 6.4 18.6 .8 9.4 4.6 10C4 3.6 10.6 -.6 19.6 1.2z" fill="#fde9a3" stroke="#0b2d4e" stroke-width="1.6" stroke-linejoin="round"/></svg>
<svg class="a" style="left:1151px;top:140px" width="21" height="19.5" viewBox="0 0 21 19.5"><g transform="translate(20.4 0) scale(-1 1)"><path d="M19.6 1.2C13 2.4 10 6 10.4 10.6L14 10.2 6.4 18.6 .8 9.4 4.6 10C4 3.6 10.6 -.6 19.6 1.2z" fill="#fde9a3" stroke="#0b2d4e" stroke-width="1.6" stroke-linejoin="round"/></g></svg>
<svg class="a" style="left:1191px;top:137px" width="23" height="24" viewBox="0 0 23 24"><path d="M8.6 23C6.6 21 3.4 16.6 .9 13.8C.3 12.6 1.8 11.2 3.2 12.2L6.4 14.8 5.2 4.6C5 3 7.2 2.6 7.6 4.2L9.4 10.6 9.6 2.2C9.6 .4 12.2 .4 12.4 2.2L13 10.6 14.8 3C15.2 1.4 17.6 1.8 17.4 3.6L16.4 11.6 19 6.4C19.8 5 21.8 5.8 21.4 7.4C20.4 11.4 19.6 15 19 17.6C18.6 19.6 17.6 21.6 16.6 23z" fill="#fde9a3" stroke="#0b2d4e" stroke-width="1.6" stroke-linejoin="round"/></svg>
<svg class="a" style="left:1233px;top:137px" width="24" height="24" viewBox="0 0 24 24"><path d="M15.4 15.4L22 22" stroke="#0b2d4e" stroke-width="3.5" stroke-linecap="round"/><circle cx="9.4" cy="9.4" r="8" fill="#f4f1e6"/><path d="M1.4 9.4A8 8 0 0 1 15.06 3.74L3.74 15.06A8 8 0 0 1 1.4 9.4z" fill="#fde9a3"/><g transform="translate(-.2 -.2)"><path d="M6 5.6H10.4L13 8.2V13.4H6z" fill="#fff8dc" stroke="#0b2d4e" stroke-width="1.7" stroke-linejoin="round"/></g><circle cx="9.4" cy="9.4" r="8" fill="none" stroke="#0b2d4e" stroke-width="2.4"/></svg>
<svg class="a" style="left:1265px;top:137px" width="24" height="24" viewBox="0 0 24 24"><path d="M15.4 15.4L22 22" stroke="#0b2d4e" stroke-width="3.5" stroke-linecap="round"/><circle cx="9.4" cy="9.4" r="8" fill="#f4f1e6"/><path d="M1.4 9.4A8 8 0 0 1 15.06 3.74L3.74 15.06A8 8 0 0 1 1.4 9.4z" fill="#fde9a3"/><g transform="translate(-.2 -.2)"><rect x="5.6" y="5.6" width="8" height="8" fill="#dfe5ea" transform="rotate(45 9.6 9.6)"/><path d="M9.6 2.8l2.2 2.6H7.4zM9.6 16.4l2.2-2.6H7.4zM2.8 9.6l2.6-2.2v4.4zM16.4 9.6l-2.6-2.2v4.4z" fill="#0b2d4e"/></g><circle cx="9.4" cy="9.4" r="8" fill="none" stroke="#0b2d4e" stroke-width="2.4"/></svg>
<svg class="a" style="left:1297px;top:137px" width="24" height="24" viewBox="0 0 24 24"><path d="M15.4 15.4L22 22" stroke="#0b2d4e" stroke-width="3.5" stroke-linecap="round"/><circle cx="9.4" cy="9.4" r="8" fill="#f4f1e6"/><path d="M1.4 9.4A8 8 0 0 1 15.06 3.74L3.74 15.06A8 8 0 0 1 1.4 9.4z" fill="#fde9a3"/><g transform="translate(-.2 -.2)"><path d="M9.6 5.2V14M5.2 9.6H14" stroke="#0b2d4e" stroke-width="2.2"/></g><circle cx="9.4" cy="9.4" r="8" fill="none" stroke="#0b2d4e" stroke-width="2.4"/></svg>
<svg class="a" style="left:1329px;top:137px" width="24" height="24" viewBox="0 0 24 24"><path d="M15.4 15.4L22 22" stroke="#0b2d4e" stroke-width="3.5" stroke-linecap="round"/><circle cx="9.4" cy="9.4" r="8" fill="#f4f1e6"/><path d="M1.4 9.4A8 8 0 0 1 15.06 3.74L3.74 15.06A8 8 0 0 1 1.4 9.4z" fill="#fde9a3"/><g transform="translate(-.2 -.2)"><path d="M5.2 9.6H14" stroke="#0b2d4e" stroke-width="2.2"/></g><circle cx="9.4" cy="9.4" r="8" fill="none" stroke="#0b2d4e" stroke-width="2.4"/></svg>
<svg class="a" style="left:1361px;top:137px" width="24" height="24" viewBox="0 0 24 24"><path d="M15.4 15.4L22 22" stroke="#0b2d4e" stroke-width="3.5" stroke-linecap="round"/><circle cx="9.4" cy="9.4" r="8" fill="#f4f1e6"/><path d="M1.4 9.4A8 8 0 0 1 15.06 3.74L3.74 15.06A8 8 0 0 1 1.4 9.4z" fill="#fff"/><g transform="translate(-.2 -.2)"><path d="M4.4 12.2L10 9.799999999999999 15 12.6 9.4 15.2z" fill="#f5e7ae" stroke="#8a8466" stroke-width=".9" stroke-linejoin="round"/><path d="M4.4 9.6L10 7.199999999999999 15 10.0 9.4 12.6z" fill="#f5e7ae" stroke="#8a8466" stroke-width=".9" stroke-linejoin="round"/><path d="M4.4 7L10 4.6 15 7.4 9.4 10z" fill="#f5e7ae" stroke="#8a8466" stroke-width=".9" stroke-linejoin="round"/></g><circle cx="9.4" cy="9.4" r="8" fill="none" stroke="#0b2d4e" stroke-width="2.4"/></svg>
<svg class="a" style="left:1403px;top:137px" width="24" height="24" viewBox="0 0 24 24"><rect x=".8" y=".8" width="17.6" height="17.6" fill="#fff" stroke="#0b2d4e" stroke-width="1.5"/><rect x="1.6" y="1.6" width="16" height="3.6" fill="#fde9a3"/><path d="M.8 5.6H18.4M.8 8.8H18.4M.8 12H18.4M.8 15.2H18.4M6.6 .8V18.4M12.4 .8V18.4" stroke="#0b2d4e" stroke-width="1.2"/><path d="M18.4 18.4L22.6 22.6" stroke="#0b2d4e" stroke-width="2.6" stroke-linecap="round"/><circle cx="15" cy="14.6" r="5" fill="#fff"/><path d="M10 14.6A5 5 0 0 1 18.54 11.06L11.46 18.14A5 5 0 0 1 10 14.6z" fill="#fde9a3"/><circle cx="15" cy="14.6" r="5" fill="none" stroke="#0b2d4e" stroke-width="1.9"/></svg>
<svg class="a" style="left:1446px;top:138px" width="22" height="22" viewBox="0 0 22 22"><path d="M1.3 8V1.3H8M14 1.3h6.7V8M20.7 14v6.7H14M8 20.7H1.3V14" fill="none" stroke="#0b2d4e" stroke-width="2.6"/></svg>
<div class="ltb" style="left:-1px;top:171px;width:30px;height:433px"></div>
<div class="ltb" style="left:32px;top:171px;width:32px;height:461px"></div>
<div class="ltb" style="left:1888px;top:171px;width:30px;height:398px"></div>
<div class="grip" style="left:0;top:175px;width:27px"></div>
<div class="grip" style="left:35px;top:175px;width:27px"></div>
<div class="grip" style="left:1891px;top:175px;width:24px"></div>
<svg class="a" style="left:1px;top:182px" width="24" height="24" viewBox="0 0 24 24"><path d="M3.5 20.5L20 4" stroke="#0b2d4e" stroke-width="1.8" fill="none" stroke-linecap="round" /><rect x="1.7520000000000002" y="18.752" width="3.4959999999999996" height="3.4959999999999996" fill="#ffecc0" stroke="#f68b4c" stroke-width="1.5"/><rect x="18.252" y="2.2520000000000002" width="3.4959999999999996" height="3.4959999999999996" fill="#ffecc0" stroke="#f68b4c" stroke-width="1.5"/></svg>
<svg class="a" style="left:1px;top:210px" width="24" height="24" viewBox="0 0 24 24"><path d="M2 16.5H19a4 4 0 0 0 0-8" fill="none" stroke="#0b2d4e" stroke-width="1.9"/><rect x="0.48" y="14.98" width="3.04" height="3.04" fill="#ffecc0" stroke="#f68b4c" stroke-width="1.5"/><rect x="16.48" y="14.98" width="3.04" height="3.04" fill="#ffecc0" stroke="#f68b4c" stroke-width="1.5"/><rect x="16.48" y="5.98" width="3.04" height="3.04" fill="#ffecc0" stroke="#f68b4c" stroke-width="1.5"/></svg>
<svg class="a" style="left:1px;top:238px" width="24" height="24" viewBox="0 0 24 24"><rect x="10.328" y="10.828" width="3.3440000000000003" height="3.3440000000000003" fill="#ffecc0" stroke="#f68b4c" stroke-width="1.5"/></svg>
<svg class="a" style="left:1px;top:266px" width="24" height="24" viewBox="0 0 24 24"><circle cx="12" cy="12" r="6.2" fill="#fde9a3"/><path d="M12 5.8A6.2 6.2 0 0 0 5.8 12H12zM12 18.2A6.2 6.2 0 0 0 18.2 12H12z" fill="#0b2d4e"/><circle cx="12" cy="12" r="6.2" fill="none" stroke="#0b2d4e" stroke-width="1.7"/><path d="M12 1V23M1 12H23" stroke="#0b2d4e" stroke-width="1.7" stroke-linecap="round"/></svg>
<svg class="a" style="left:1px;top:294px" width="24" height="24" viewBox="0 0 24 24"><path d="M3.5 20C3 10 9 4.5 19 4.5" fill="none" stroke="#0b2d4e" stroke-width="2" /><rect x="1.7520000000000002" y="19.252" width="3.4959999999999996" height="3.4959999999999996" fill="#ffecc0" stroke="#f68b4c" stroke-width="1.5"/><rect x="18.252" y="2.7520000000000002" width="3.4959999999999996" height="3.4959999999999996" fill="#ffecc0" stroke="#f68b4c" stroke-width="1.5"/></svg>
<svg class="a" style="left:1px;top:322px" width="24" height="24" viewBox="0 0 24 24"><circle cx="12" cy="12" r="9.6" fill="#eaeaea"/><path d="M2.4 12A9.6 9.6 0 0 1 18.8 5.2L5.2 18.8A9.6 9.6 0 0 1 2.4 12z" fill="#fde9a3"/><circle cx="12" cy="12" r="9.6" fill="none" stroke="#0b2d4e" stroke-width="2.1"/><rect x="10.632" y="11.032" width="2.736" height="2.736" fill="#ffecc0" stroke="#f68b4c" stroke-width="1.5"/></svg>
<svg class="a" style="left:1px;top:350px" width="24" height="24" viewBox="0 0 24 24"><ellipse cx="12" cy="12" rx="10.4" ry="6.6" fill="#eaeaea"/><path d="M1.6 12C1.6 6 12 3.6 18.6 7L4.6 16.6C2.6 15.4 1.6 13.8 1.6 12z" fill="#fde9a3"/><ellipse cx="12" cy="12" rx="10.4" ry="6.6" fill="none" stroke="#0b2d4e" stroke-width="2.1"/><rect x="10.432" y="10.831999999999999" width="2.736" height="2.736" fill="#ffecc0" stroke="#f68b4c" stroke-width="1.5"/></svg>
<svg class="a" style="left:1px;top:378px" width="24" height="24" viewBox="0 0 24 24"><path d="M3 5H21V19H3z" fill="#eaeaea"/><path d="M3 5H21L3 19z" fill="#fde9a3"/><path d="M3 5H21V19H3z" fill="none" stroke="#0b2d4e" stroke-width="2"/><rect x="19.956" y="3.1559999999999997" width="2.888" height="2.888" fill="#ffecc0" stroke="#f68b4c" stroke-width="1.5"/><rect x="1.1560000000000001" y="17.556" width="2.888" height="2.888" fill="#ffecc0" stroke="#f68b4c" stroke-width="1.5"/></svg>
<svg class="a" style="left:1px;top:406px" width="24" height="24" viewBox="0 0 24 24"><path d="M5.2 19L12 2.6 18.8 19M7.6 13.6H16.4" fill="none" stroke="#0b2d4e" stroke-width="2.3" stroke-linejoin="round"/><path d="M2 22H22" stroke="#f68b4c" stroke-width="1.9"/></svg>
<svg class="a" style="left:1px;top:434px" width="24" height="24" viewBox="0 0 24 24"><path d="M2.4 2.6L11 2 22.4 13.4 13.4 22.4 2 11z" transform="rotate(-8 12 12)" fill="#fde9a3" stroke="#0b2d4e" stroke-width="1.8" stroke-linejoin="round"/><circle cx="6.6" cy="7" r="2" fill="#f68b4c"/><path d="M11 10l3.6 1.6M12.6 15l3.6 1.6M12.6 10.6l1.6 5" stroke="#0b2d4e" stroke-width="1.6"/></svg>
<svg class="a" style="left:1px;top:462px" width="24" height="24" viewBox="0 0 24 24"><path d="M2 2.6H16.4V14H2z" fill="#e8e8e8"/><path d="M2 2.6H16.4L2 14z" fill="#fde9a3"/><path d="M2 12.6V2.6H16.4V8" fill="none" stroke="#0b2d4e" stroke-width="1.8"/><circle cx="14.6" cy="15.6" r="7.2" fill="#e8e8e8"/><path d="M7.4 15.6A7.2 7.2 0 0 1 19.7 10.5L9.5 20.7A7.2 7.2 0 0 1 7.4 15.6z" fill="#fde9a3"/><circle cx="14.6" cy="15.6" r="7.2" fill="none" stroke="#0b2d4e" stroke-width="1.8"/><rect x="0.7839999999999998" y="11.783999999999999" width="2.4320000000000004" height="2.4320000000000004" fill="#ffecc0" stroke="#f68b4c" stroke-width="1.5"/><rect x="13.736" y="14.736" width="2.1279999999999997" height="2.1279999999999997" fill="#ffecc0" stroke="#f68b4c" stroke-width="1.5"/></svg>
<svg class="a" style="left:1px;top:490px" width="24" height="24" viewBox="0 0 24 24"><path d="M2 2.6H16.4V14H2z" fill="#e8e8e8"/><path d="M2 2.6H16.4L2 14z" fill="#fde9a3"/><path d="M2 12.6V2.6H16.4V8" fill="none" stroke="#0b2d4e" stroke-width="1.8"/><circle cx="14.6" cy="15.6" r="7.2" fill="#e8e8e8"/><path d="M7.4 15.6A7.2 7.2 0 0 1 19.7 10.5L9.5 20.7A7.2 7.2 0 0 1 7.4 15.6z" fill="#fde9a3"/><circle cx="14.6" cy="15.6" r="7.2" fill="none" stroke="#0b2d4e" stroke-width="1.8"/><rect x="0.7839999999999998" y="11.783999999999999" width="2.4320000000000004" height="2.4320000000000004" fill="#ffecc0" stroke="#f68b4c" stroke-width="1.5"/><rect x="13.736" y="14.736" width="2.1279999999999997" height="2.1279999999999997" fill="#ffecc0" stroke="#f68b4c" stroke-width="1.5"/></svg>
<svg class="a" style="left:1px;top:518px" width="24" height="24" viewBox="0 0 24 24"><path d="M2 4.6H12V14H2z" fill="#fde9a3"/><path d="M2 13V4.6H11" fill="none" stroke="#0b2d4e" stroke-width="1.8"/><circle cx="14.6" cy="16.4" r="6.8" fill="#e8e8e8"/><path d="M7.8 16.4A6.8 6.8 0 0 1 19.4 11.6L9.8 21.2A6.8 6.8 0 0 1 7.8 16.4z" fill="#fde9a3"/><circle cx="14.6" cy="16.4" r="6.8" fill="none" stroke="#0b2d4e" stroke-width="1.8"/><path d="M9.6 12C10.6 7.6 14 5.4 17.6 5.6V2.6L23.4 7 17.6 11V8.4C14.6 8.2 12 9.400000000000002 9.6 12z" fill="#f68b4c" stroke="#0b2d4e" stroke-width=".7"/><rect x="0.7839999999999998" y="13.184000000000001" width="2.4320000000000004" height="2.4320000000000004" fill="#ffecc0" stroke="#f68b4c" stroke-width="1.5"/><rect x="13.736" y="15.536000000000001" width="2.1279999999999997" height="2.1279999999999997" fill="#ffecc0" stroke="#f68b4c" stroke-width="1.5"/></svg>
<svg class="a" style="left:1px;top:546px" width="24" height="24" viewBox="0 0 24 24"><defs><pattern id="hp" width="3" height="3" patternUnits="userSpaceOnUse" patternTransform="rotate(-45)"><rect width="3" height="3" fill="#fde9a3"/><rect width="3" height="1.2" fill="#0b2d4e"/></pattern></defs><rect x="4.4" y="4" width="16" height="16" fill="url(#hp)"/><path d="M4.4 20L20.4 4V20z" fill="#e8e8e8"/><path d="M0 4H24M0 19.8H24M4.4 0V24M20.2 0V24M4.4 19.8L22.6 3" fill="none" stroke="#0b2d4e" stroke-width="2.3"/></svg>
<svg class="a" style="left:1px;top:574px" width="24" height="24" viewBox="0 0 24 24"><rect x="4.4" y="4" width="16" height="16" fill="#fde9a3"/><path d="M5 20L20.4 5V20z" fill="#e8e8e8"/><path d="M0 4H24M0 19.8H24M4.4 0V24M20.2 0V24M4.4 19.8L22.6 3" fill="none" stroke="#0b2d4e" stroke-width="2.3"/></svg>
<svg class="a" style="left:36px;top:182px" width="24" height="24" viewBox="0 0 24 24"><path d="M14.6 4.4H22.4L13.6 18H7z" fill="#fde9a3" stroke="#0b2d4e" stroke-width="1.9" stroke-linejoin="round"/><path d="M9.4 12.8L14.4 15.8 12.4 19.6 6.4 16.8z" fill="#f68b4c" stroke="#0b2d4e" stroke-width=".8"/><path d="M.8 18.7H22.8" stroke="#0b2d4e" stroke-width="1.9" stroke-linecap="round"/></svg>
<svg class="a" style="left:36px;top:210px" width="24" height="24" viewBox="0 0 24 24"><circle cx="4.4" cy="5.4" r="3.2" fill="#fde9a3" stroke="#0b2d4e" stroke-width="1.4"/><circle cx="13.6" cy="17" r="3.4" fill="#fde9a3" stroke="#0b2d4e" stroke-width="1.4"/><circle cx="18.4" cy="19.2" r="3.4" fill="#fde9a3" stroke="#0b2d4e" stroke-width="1.4"/><path d="M7 2.4C13 -.6 19 2.4 19.8 8.6L23.4 7.6 18.6 16 12.6 9.8 16.4 9C15.600000000000001 5 12 3 7.6 4z" fill="#f68b4c" stroke="#0b2d4e" stroke-width=".9" stroke-linejoin="round"/></svg>
<svg class="a" style="left:36px;top:238px" width="24" height="24" viewBox="0 0 24 24"><path d="M9.6 3.4V19.4H1.2z" fill="#fde9a3" stroke="#0b2d4e" stroke-width="1.5" stroke-linejoin="round"/><path d="M14.4 3.4V19.4H22.8z" fill="#fde9a3" stroke="#0b2d4e" stroke-width="1.5" stroke-linejoin="round"/><path d="M12 .6V23" stroke="#f68b4c" stroke-width="1.8"/></svg>
<svg class="a" style="left:36px;top:266px" width="24" height="24" viewBox="0 0 24 24"><g transform="translate(0 -2.6)"><path d="M23 21H5.6C-.4 21 .6 12.6 6 13.4 5.6 6.600000000000001 14.6 5.6 15.6 11H23" fill="none" stroke="#0b2d4e" stroke-width="2"/><path d="M23 18H6.6C3 18 3.6 15.6 7.6 16 7.6 11 13 10.6 14 14.2H23" fill="none" stroke="#f68b4c" stroke-width="1.1" stroke-dasharray="1.4 .7"/></g></svg>
<svg class="a" style="left:36px;top:294px" width="24" height="24" viewBox="0 0 24 24"><rect x="1.2" y="1.6" width="9.4" height="9.4" fill="#fde9a3" stroke="#0b2d4e" stroke-width="1.5"/><rect x="1.2" y="14" width="9.4" height="9.4" fill="#fde9a3" stroke="#0b2d4e" stroke-width="1.5"/><rect x="13.4" y="1.6" width="9.4" height="9.4" fill="#fde9a3" stroke="#0b2d4e" stroke-width="1.5"/><rect x="13.4" y="14" width="9.4" height="9.4" fill="#fde9a3" stroke="#0b2d4e" stroke-width="1.5"/></svg>
<svg class="a" style="left:36px;top:322px" width="24" height="24" viewBox="0 0 24 24"><path d="M12 3V21M3 12H21" stroke="#0b2d4e" stroke-width="3"/><path d="M12 0L16.4 6.2H7.6zM12 24L16.4 17.8H7.6zM0 12L6.2 7.6V16.4zM24 12L17.8 7.6V16.4z" fill="#0b2d4e"/></svg>
<svg class="a" style="left:36px;top:350px" width="24" height="24" viewBox="0 0 24 24"><path d="M7 5.6A8.6 8.6 0 1 1 6.8 19.6" fill="none" stroke="#0b2d4e" stroke-width="3.8"/><path d="M.6 9L10.6 3.6 10 14z" fill="#0b2d4e"/></svg>
<svg class="a" style="left:36px;top:378px" width="24" height="24" viewBox="0 0 24 24"><g transform="rotate(-40 12 12)"><rect x="2.6" y="9.6" width="9" height="9" fill="#fde9a3" stroke="#0b2d4e" stroke-width="1.5"/><rect x="11.6" y="6.6" width="9" height="12" fill="#fde9a3" stroke="#0b2d4e" stroke-width="1.5" transform="translate(0 -3)"/><path d="M1 21.4H23" stroke="#f68b4c" stroke-width="1.6"/></g></svg>
<svg class="a" style="left:36px;top:406px" width="24" height="24" viewBox="0 0 24 24"><rect x="1.4" y="1.6" width="21.4" height="21" fill="#fde9a3" stroke="#0b2d4e" stroke-width="1.7"/><path d="M1.4 12H12.6V22.6" fill="none" stroke="#0b2d4e" stroke-width="1.7" stroke-dasharray="2.2 1.6"/></svg>
<svg class="a" style="left:36px;top:434px" width="24" height="24" viewBox="0 0 24 24"><path d="M1.4 1.6H16.6L22.8 22.6H1.4z" fill="#fde9a3" stroke="#0b2d4e" stroke-width="1.7" stroke-linejoin="round"/><path d="M12 2.6V22" stroke="#0b2d4e" stroke-width="1.7" stroke-dasharray="2 1.8"/></svg>
<svg class="a" style="left:36px;top:462px" width="24" height="24" viewBox="0 0 24 24"><path d="M1 12H11" stroke="#0b2d4e" stroke-width="2.2"/><path d="M14.6 12H23.6" stroke="#0b2d4e" stroke-width="1.8" stroke-dasharray="1.6 1.8"/><path d="M16.6 1.6L8.6 22" stroke="#f68b4c" stroke-width="1.8" stroke-linecap="round"/></svg>
<svg class="a" style="left:36px;top:490px" width="24" height="24" viewBox="0 0 24 24"><path d="M1 12H9.6" stroke="#0b2d4e" stroke-width="2.2"/><path d="M10.6 12H17" stroke="#0b2d4e" stroke-width="1.8" stroke-dasharray="1.6 1.8"/><path d="M23 3L16.6 20.6" stroke="#f68b4c" stroke-width="1.8" stroke-linecap="round"/></svg>
<svg class="a" style="left:36px;top:518px" width="24" height="24" viewBox="0 0 24 24"><rect x="1.4" y="3.4" width="21.4" height="19.4" fill="#fde9a3" stroke="#0b2d4e" stroke-width="1.7"/><path d="M7.4 3.4H16.6" stroke="#fde9a3" stroke-width="2.2"/><rect x="5.632" y="1.832" width="2.736" height="2.736" fill="#ffecc0" stroke="#f68b4c" stroke-width="1.5"/><rect x="16.032" y="1.832" width="2.736" height="2.736" fill="#ffecc0" stroke="#f68b4c" stroke-width="1.5"/></svg>
<svg class="a" style="left:36px;top:546px" width="24" height="24" viewBox="0 0 24 24"><path d="M2 9.600000000000001V2H9.6" fill="none" stroke="#0b2d4e" stroke-width="1.7" stroke-dasharray="1.6 1.8"/><path d="M16 2H23M2 16V23" stroke="#0b2d4e" stroke-width="2.2"/><path d="M2 16C2 7 7 2 16 2" fill="none" stroke="#f68b4c" stroke-width="2"/></svg>
<svg class="a" style="left:36px;top:574px" width="24" height="24" viewBox="0 0 24 24"><path d="M2 23V2H23" fill="none" stroke="#0b2d4e" stroke-width="2.2"/><path d="M2 15.6L14.6 2.6" stroke="#f68b4c" stroke-width="1.8"/></svg>
<svg class="a" style="left:36px;top:602px" width="24" height="24" viewBox="0 0 24 24"><path d="M13.7 0.7L15.0 7.5L21.9 6.3L17.4 11.6L22.6 16.2L15.7 16.0L15.4 22.9L11.2 17.3L4.9 22.4L7.3 14.7L0.6 12.8L7.0 10.0L4.2 3.6L10.4 6.8z" fill="#fde9a3" stroke="#0b2d4e" stroke-width="1.3" stroke-linejoin="round"/><path d="M12.8 6.7L13.5 10.1L16.9 9.4L14.6 12.0L17.2 14.2L13.8 14.1L13.6 17.6L11.6 14.8L8.8 16.8L9.7 13.5L6.4 12.6L9.6 11.2L8.2 8.1L11.2 9.7z" fill="#f68b4c"/></svg>
<svg class="a" style="left:1892px;top:182px" width="24" height="24" viewBox="0 0 24 24"><path d="M4 19L20 4" stroke="#0b2d4e" stroke-width="1.7" fill="none" stroke-linecap="round" /><circle cx="3.6" cy="19.4" r="2.7" fill="#fff" stroke="#f68b4c" stroke-width="1.7"/><circle cx="20.4" cy="3.6" r="2.7" fill="#fff" stroke="#f68b4c" stroke-width="1.7"/></svg>
<svg class="a" style="left:1892px;top:210px" width="24" height="24" viewBox="0 0 24 24"><path d="M2 22L22 2" stroke="#0b2d4e" stroke-width="1.7" fill="none" stroke-linecap="round" /><circle cx="10" cy="14" r="2.7" fill="#fff" stroke="#f68b4c" stroke-width="1.7"/></svg>
<svg class="a" style="left:1892px;top:238px" width="24" height="24" viewBox="0 0 24 24"><circle cx="12" cy="12" r="9.6" fill="#fde9a3" stroke="#0b2d4e" stroke-width="1.9"/><circle cx="12" cy="12" r="2.6" fill="#fff" stroke="#f68b4c" stroke-width="1.7"/></svg>
<svg class="a" style="left:1892px;top:266px" width="24" height="24" viewBox="0 0 24 24"><path d="M3 3L21 21" stroke="#0b2d4e" stroke-width="1.7" fill="none" stroke-linecap="round" /><path d="M3 21L21 3" stroke="#0b2d4e" stroke-width="1.7" fill="none" stroke-linecap="round" /><circle cx="12" cy="12" r="2.7" fill="#fff" stroke="#f68b4c" stroke-width="1.7"/></svg>
<svg class="a" style="left:1892px;top:294px" width="24" height="24" viewBox="0 0 24 24"><path d="M3 3L21 21" stroke="#0b2d4e" stroke-width="1.7" fill="none" stroke-linecap="round" stroke-dasharray="2.4 2.4"/><path d="M3 21L21 3" stroke="#0b2d4e" stroke-width="1.7" fill="none" stroke-linecap="round" /><circle cx="12" cy="12" r="2.7" fill="#fff" stroke="#f68b4c" stroke-width="1.7"/></svg>
<svg class="a" style="left:1892px;top:322px" width="24" height="24" viewBox="0 0 24 24"><path d="M6.6 4H22M4 7V21" stroke="#0b2d4e" stroke-width="1.7" stroke-dasharray="2.4 2.6"/><circle cx="4" cy="4" r="2.8" fill="#fff" stroke="#f68b4c" stroke-width="1.7"/></svg>
<svg class="a" style="left:1892px;top:350px" width="24" height="24" viewBox="0 0 24 24"><path d="M3.6 2.6H16.4V14H3.6z" fill="#e8e8e8"/><path d="M3.6 2.6H16.4L3.6 14z" fill="#fde9a3"/><path d="M3.6 9V2.6H16.4V8" fill="none" stroke="#0b2d4e" stroke-width="1.6"/><circle cx="15.6" cy="15.6" r="6.8" fill="#e8e8e8"/><path d="M8.8 15.6A6.8 6.8 0 0 1 20.4 10.8L10.8 20.4A6.8 6.8 0 0 1 8.8 15.6z" fill="#fde9a3"/><circle cx="15.6" cy="15.6" r="6.8" fill="none" stroke="#0b2d4e" stroke-width="1.7"/><circle cx="3.4" cy="12.6" r="2" fill="#fff" stroke="#f68b4c" stroke-width="1.7"/></svg>
<svg class="a" style="left:1892px;top:378px" width="24" height="24" viewBox="0 0 24 24"><path d="M12 2V20M2 20H22" stroke="#0b2d4e" stroke-width="1.7"/><circle cx="12" cy="20" r="2.7" fill="#fff" stroke="#f68b4c" stroke-width="1.7"/></svg>
<svg class="a" style="left:1892px;top:406px" width="24" height="24" viewBox="0 0 24 24"><path d="M2 19L13 8" stroke="#0b2d4e" stroke-width="1.7" fill="none" stroke-linecap="round" /><circle cx="17.6" cy="12.4" r="3" fill="#fff" stroke="#0b2d4e" stroke-width="1.5"/><circle cx="12.6" cy="8.4" r="2.7" fill="#fff" stroke="#f68b4c" stroke-width="1.7"/></svg>
<svg class="a" style="left:1892px;top:434px" width="24" height="24" viewBox="0 0 24 24"><circle cx="11.6" cy="11.8" r="2.6" fill="#fff" stroke="#f68b4c" stroke-width="1.7"/></svg>
<svg class="a" style="left:1892px;top:462px" width="24" height="24" viewBox="0 0 24 24"><circle cx="12" cy="12" r="8.2" fill="#fde9a3" stroke="#0b2d4e" stroke-width="1.8"/><circle cx="12" cy="3.6" r="2.7" fill="#fff" stroke="#f68b4c" stroke-width="1.7"/><circle cx="12" cy="20.4" r="2.7" fill="#fff" stroke="#f68b4c" stroke-width="1.7"/><circle cx="3.6" cy="12" r="2.7" fill="#fff" stroke="#f68b4c" stroke-width="1.7"/><circle cx="20.4" cy="12" r="2.7" fill="#fff" stroke="#f68b4c" stroke-width="1.7"/></svg>
<svg class="a" style="left:1892px;top:490px" width="24" height="24" viewBox="0 0 24 24"><circle cx="13" cy="13.4" r="8.6" fill="#fde9a3" stroke="#0b2d4e" stroke-width="1.8"/><path d="M3 9.6L9.6 3.6M9.6 3.6L6.4 3.4M9.6 3.6L9.4 6.8" stroke="#0b2d4e" stroke-width="1.3" fill="none"/><circle cx="5.6" cy="7.2" r="2.7" fill="#fff" stroke="#f68b4c" stroke-width="1.7"/></svg>
<svg class="a" style="left:1892px;top:518px" width="24" height="24" viewBox="0 0 24 24"><path d="M6 3V12.6A6.4 6.4 0 0 0 18.8 12.6V3" fill="none" stroke="#0b2d4e" stroke-width="4.4"/><rect x="4.6" y="2.6" width="2.6" height="2.6" fill="#fde9a3"/><rect x="17.4" y="2.6" width="2.6" height="2.6" fill="#fde9a3"/><path d="M1.6 19.6L22 1" stroke="#f68b4c" stroke-width="1.9" stroke-linecap="round"/><rect x="19.6" y="17.6" width="3" height="3" fill="#0b2d4e"/></svg>
<svg class="a" style="left:1892px;top:546px" width="24" height="24" viewBox="0 0 24 24"><rect x="1.6" y="-1" width="24" height="26" fill="#dfeaf7"/><path d="M6 3V12.6A6.4 6.4 0 0 0 18.8 12.6V3" fill="none" stroke="#0b2d4e" stroke-width="4.4"/><rect x="4.6" y="2.6" width="2.6" height="2.6" fill="#fde9a3"/><rect x="17.4" y="2.6" width="2.6" height="2.6" fill="#fde9a3"/><rect x="19.6" y="18.6" width="3" height="3" fill="#f68b4c"/></svg>
<svg class="a" style="left:0;top:0" width="1912" height="1003" viewBox="0 0 1912 1003" shape-rendering="crispEdges">
<defs><pattern id="hp0" width="28" height="28" patternUnits="userSpaceOnUse"><g fill="#f00"><rect x="22" y="0" width="1" height="1"/><rect x="11" y="0" width="1" height="1"/><rect x="21" y="1" width="1" height="1"/><rect x="10" y="1" width="1" height="1"/><rect x="20" y="2" width="1" height="1"/><rect x="9" y="2" width="1" height="1"/><rect x="19" y="3" width="1" height="1"/><rect x="8" y="3" width="1" height="1"/><rect x="18" y="4" width="1" height="1"/><rect x="7" y="4" width="1" height="1"/><rect x="17" y="5" width="1" height="1"/><rect x="6" y="5" width="1" height="1"/><rect x="16" y="6" width="1" height="1"/><rect x="5" y="6" width="1" height="1"/><rect x="15" y="7" width="1" height="1"/><rect x="4" y="7" width="1" height="1"/><rect x="14" y="8" width="1" height="1"/><rect x="3" y="8" width="1" height="1"/><rect x="13" y="9" width="1" height="1"/><rect x="2" y="9" width="1" height="1"/><rect x="12" y="10" width="1" height="1"/><rect x="1" y="10" width="1" height="1"/><rect x="11" y="11" width="1" height="1"/><rect x="0" y="11" width="1" height="1"/><rect x="10" y="12" width="1" height="1"/><rect x="27" y="12" width="1" height="1"/><rect x="9" y="13" width="1" height="1"/><rect x="26" y="13" width="1" height="1"/><rect x="8" y="14" width="1" height="1"/><rect x="25" y="14" width="1" height="1"/><rect x="7" y="15" width="1" height="1"/><rect x="24" y="15" width="1" height="1"/><rect x="6" y="16" width="1" height="1"/><rect x="23" y="16" width="1" height="1"/><rect x="5" y="17" width="1" height="1"/><rect x="22" y="17" width="1" height="1"/><rect x="4" y="18" width="1" height="1"/><rect x="21" y="18" width="1" height="1"/><rect x="3" y="19" width="1" height="1"/><rect x="20" y="19" width="1" height="1"/><rect x="2" y="20" width="1" height="1"/><rect x="19" y="20" width="1" height="1"/><rect x="1" y="21" width="1" height="1"/><rect x="18" y="21" width="1" height="1"/><rect x="0" y="22" width="1" height="1"/><rect x="17" y="22" width="1" height="1"/><rect x="27" y="23" width="1" height="1"/><rect x="16" y="23" width="1" height="1"/><rect x="26" y="24" width="1" height="1"/><rect x="15" y="24" width="1" height="1"/><rect x="25" y="25" width="1" height="1"/><rect x="14" y="25" width="1" height="1"/><rect x="24" y="26" width="1" height="1"/><rect x="13" y="26" width="1" height="1"/><rect x="23" y="27" width="1" height="1"/><rect x="12" y="27" width="1" height="1"/></g></pattern></defs>
<polygon points="976.6,173.4 1024.3,266.5 1063,283 1088,297 1105,305.7 1135,329.5 1134,341 1127.7,351 1128.8,364 1126.2,367 1132.1,384.7 1129.5,405.4 1122.3,421 1121.2,428.8 1114.5,439.1 1123,439.1 1128.8,448.2 1129.5,459.8 1125.6,475.4 1134,480.5 1171.6,500.2 1159.3,534.4 1150,570.8 1117.5,748.1 1078.9,809.8 1045.2,861.7 1021.3,892.8 968.7,683.5 950.6,640 917.6,563.2 938.9,508.7 967.4,465.9 954.6,457 849.2,417 781.4,276" fill="url(#hp0)"/>
<polygon points="1046.5,469 1150,570.8 1117.5,748.1 976,672.5 1015.4,619 1033.8,576.6 1017.2,494" fill="#00ff00" stroke="#00ff00" stroke-width="1"/>
<path d="M975 173.5h2M973 174.5h2M977 174.5h1M972 175.5h1M977 175.5h1M970 176.5h2M978 176.5h1M968 177.5h2M978 177.5h1M966 178.5h2M979 178.5h1M964 179.5h2M979 179.5h1M962 180.5h2M980 180.5h1M960 181.5h2M980 181.5h1M958 182.5h2M981 182.5h1M956 183.5h2M981 183.5h1M954 184.5h2M982 184.5h1M953 185.5h1M982 185.5h1M951 186.5h2M983 186.5h1M949 187.5h2M983 187.5h1M947 188.5h2M984 188.5h1M945 189.5h2M984 189.5h1M943 190.5h2M985 190.5h1M941 191.5h2M985 191.5h1M939 192.5h2M986 192.5h1M937 193.5h2M986 193.5h1M935 194.5h2M987 194.5h1M934 195.5h1M987 195.5h1M932 196.5h2M988 196.5h1M930 197.5h2M988 197.5h1M928 198.5h2M989 198.5h1M926 199.5h2M989 199.5h1M924 200.5h2M990 200.5h1M922 201.5h2M990 201.5h1M920 202.5h2M991 202.5h1M918 203.5h2M991 203.5h1M916 204.5h2M992 204.5h1M915 205.5h1M993 205.5h1M913 206.5h2M993 206.5h1M911 207.5h2M994 207.5h1M909 208.5h2M994 208.5h1M907 209.5h2M995 209.5h1M905 210.5h2M995 210.5h1M903 211.5h2M996 211.5h1M901 212.5h2M996 212.5h1M899 213.5h2M997 213.5h1M897 214.5h2M997 214.5h1M896 215.5h1M998 215.5h1M894 216.5h2M998 216.5h1M892 217.5h2M999 217.5h1M890 218.5h2M999 218.5h1M888 219.5h2M1000 219.5h1M886 220.5h2M1000 220.5h1M884 221.5h2M1001 221.5h1M882 222.5h2M1001 222.5h1M880 223.5h2M1002 223.5h1M878 224.5h2M1002 224.5h1M877 225.5h1M1003 225.5h1M875 226.5h2M1003 226.5h1M873 227.5h2M1004 227.5h1M871 228.5h2M1004 228.5h1M869 229.5h2M1005 229.5h1M867 230.5h2M1005 230.5h1M865 231.5h2M1006 231.5h1M863 232.5h2M1006 232.5h1M861 233.5h2M1007 233.5h1M859 234.5h2M1007 234.5h1M858 235.5h1M1008 235.5h1M856 236.5h2M1008 236.5h1M854 237.5h2M1009 237.5h1M852 238.5h2M1009 238.5h1M850 239.5h2M1010 239.5h1M848 240.5h2M1010 240.5h1M846 241.5h2M1011 241.5h1M844 242.5h2M1011 242.5h1M842 243.5h2M1012 243.5h1M840 244.5h2M1013 244.5h1M839 245.5h1M1013 245.5h1M837 246.5h2M1014 246.5h1M835 247.5h2M1014 247.5h1M833 248.5h2M1015 248.5h1M831 249.5h2M1015 249.5h1M829 250.5h2M1016 250.5h1M827 251.5h2M1016 251.5h1M825 252.5h2M1017 252.5h1M823 253.5h2M1017 253.5h1M821 254.5h2M1018 254.5h1M820 255.5h1M1018 255.5h1M818 256.5h2M1019 256.5h1M816 257.5h2M1019 257.5h1M814 258.5h2M1020 258.5h1M812 259.5h2M1020 259.5h1M810 260.5h2M1021 260.5h1M808 261.5h2M1021 261.5h1M806 262.5h2M1022 262.5h1M804 263.5h2M1022 263.5h1M802 264.5h2M1023 264.5h1M801 265.5h1M1023 265.5h1M799 266.5h2M1024 266.5h2M797 267.5h2M1026 267.5h2M795 268.5h2M1028 268.5h2M793 269.5h2M1030 269.5h3M791 270.5h2M1033 270.5h2M789 271.5h2M1035 271.5h2M787 272.5h2M1037 272.5h2M785 273.5h2M1039 273.5h3M783 274.5h2M1042 274.5h2M782 275.5h1M1044 275.5h2M781 276.5h1M1046 276.5h3M781 277.5h1M1049 277.5h2M782 278.5h1M1051 278.5h2M782 279.5h1M1053 279.5h3M783 280.5h1M1056 280.5h2M783 281.5h1M1058 281.5h2M784 282.5h1M1060 282.5h2M784 283.5h1M1063 283.5h2M785 284.5h1M1065 284.5h2M785 285.5h1M1067 285.5h2M786 286.5h1M1069 286.5h2M786 287.5h1M1071 287.5h1M787 288.5h1M1072 288.5h2M787 289.5h1M1074 289.5h2M788 290.5h1M1076 290.5h2M788 291.5h1M1078 291.5h2M789 292.5h1M1080 292.5h1M789 293.5h1M1081 293.5h2M790 294.5h1M1083 294.5h2M790 295.5h1M1085 295.5h2M791 296.5h1M1087 296.5h1M791 297.5h1M1088 297.5h2M791 298.5h1M1090 298.5h2M792 299.5h1M1092 299.5h2M792 300.5h1M1094 300.5h2M793 301.5h1M1096 301.5h2M793 302.5h1M1098 302.5h2M794 303.5h1M1100 303.5h2M794 304.5h1M1102 304.5h2M795 305.5h1M1104 305.5h2M795 306.5h1M1106 306.5h1M796 307.5h1M1107 307.5h1M796 308.5h1M1108 308.5h2M797 309.5h1M1110 309.5h1M797 310.5h1M1111 310.5h1M798 311.5h1M1112 311.5h1M798 312.5h1M1113 312.5h2M799 313.5h1M1115 313.5h1M799 314.5h1M1116 314.5h1M800 315.5h1M1117 315.5h1M800 316.5h1M1118 316.5h2M801 317.5h1M1120 317.5h1M801 318.5h1M1121 318.5h1M802 319.5h1M1122 319.5h2M802 320.5h1M1124 320.5h1M803 321.5h1M1125 321.5h1M803 322.5h1M1126 322.5h1M804 323.5h1M1127 323.5h2M804 324.5h1M1129 324.5h1M804 325.5h1M1130 325.5h1M805 326.5h1M1131 326.5h1M805 327.5h1M1132 327.5h2M806 328.5h1M1134 328.5h1M806 329.5h1M1135 329.5h1M807 330.5h1M1134 330.5h1M807 331.5h1M1134 331.5h1M808 332.5h1M1134 332.5h1M808 333.5h1M1134 333.5h1M809 334.5h1M1134 334.5h1M809 335.5h1M1134 335.5h1M810 336.5h1M1134 336.5h1M810 337.5h1M1134 337.5h1M811 338.5h1M1134 338.5h1M811 339.5h1M1134 339.5h1M812 340.5h1M812 341.5h1M1134 341.5h1M813 342.5h1M1133 342.5h1M813 343.5h1M1132 343.5h1M814 344.5h1M1132 344.5h1M814 345.5h1M1131 345.5h1M815 346.5h1M1130 346.5h1M815 347.5h1M1130 347.5h1M816 348.5h1M1129 348.5h1M816 349.5h1M1128 349.5h1M816 350.5h1M1128 350.5h1M817 351.5h1M1127 351.5h1M817 352.5h1M1127 352.5h1M818 353.5h1M1127 353.5h1M818 354.5h1M1127 354.5h1M819 355.5h1M1128 355.5h1M819 356.5h1M1128 356.5h1M820 357.5h1M1128 357.5h1M820 358.5h1M1128 358.5h1M821 359.5h1M1128 359.5h1M821 360.5h1M1128 360.5h1M822 361.5h1M1128 361.5h1M822 362.5h1M1128 362.5h1M823 363.5h1M1128 363.5h1M823 364.5h1M1128 364.5h1M824 365.5h1M1127 365.5h1M824 366.5h1M1127 366.5h1M825 367.5h1M1126 367.5h1M825 368.5h1M1126 368.5h1M826 369.5h1M1126 369.5h1M826 370.5h1M1127 370.5h1M827 371.5h1M1127 371.5h1M827 372.5h1M1127 372.5h1M828 373.5h1M1128 373.5h1M828 374.5h1M1128 374.5h1M829 375.5h1M1128 375.5h1M829 376.5h1M1129 376.5h1M829 377.5h1M1129 377.5h1M830 378.5h1M1130 378.5h1M830 379.5h1M1130 379.5h1M831 380.5h1M1130 380.5h1M831 381.5h1M1131 381.5h1M832 382.5h1M1131 382.5h1M832 383.5h1M1131 383.5h1M833 384.5h1M1132 384.5h1M833 385.5h1M1131 385.5h1M834 386.5h1M1131 386.5h1M834 387.5h1M1131 387.5h1M835 388.5h1M1131 388.5h1M835 389.5h1M1131 389.5h1M836 390.5h1M1131 390.5h1M836 391.5h1M1131 391.5h1M837 392.5h1M1131 392.5h1M837 393.5h1M838 394.5h1M1130 394.5h1M838 395.5h1M1130 395.5h1M839 396.5h1M1130 396.5h1M839 397.5h1M1130 397.5h1M840 398.5h1M1130 398.5h1M840 399.5h1M1130 399.5h1M841 400.5h1M1130 400.5h1M841 401.5h1M1130 401.5h1M841 402.5h1M1129 402.5h1M842 403.5h1M1129 403.5h1M842 404.5h1M1129 404.5h1M843 405.5h1M1129 405.5h1M843 406.5h1M1129 406.5h1M844 407.5h1M1128 407.5h1M844 408.5h1M1128 408.5h1M845 409.5h1M1127 409.5h1M845 410.5h1M1127 410.5h1M846 411.5h1M1126 411.5h1M846 412.5h1M1126 412.5h1M847 413.5h1M1125 413.5h1M847 414.5h1M1125 414.5h1M848 415.5h1M1124 415.5h1M848 416.5h1M1124 416.5h1M849 417.5h3M1123 417.5h1M852 418.5h3M1123 418.5h1M855 419.5h2M1122 419.5h1M857 420.5h3M860 421.5h3M1122 421.5h1M863 422.5h2M1122 422.5h1M865 423.5h3M1121 423.5h1M868 424.5h2M1121 424.5h1M870 425.5h3M1121 425.5h1M873 426.5h3M1121 426.5h1M876 427.5h2M1121 427.5h1M878 428.5h3M1121 428.5h1M881 429.5h3M1120 429.5h1M884 430.5h2M1119 430.5h1M886 431.5h3M1119 431.5h1M889 432.5h2M1118 432.5h1M891 433.5h3M1117 433.5h1M894 434.5h3M1117 434.5h1M897 435.5h2M899 436.5h3M1116 436.5h1M902 437.5h3M1115 437.5h1M905 438.5h2M1115 438.5h1M907 439.5h3M1114 439.5h8M1123 439.5h1M910 440.5h2M1123 440.5h1M912 441.5h3M1124 441.5h1M915 442.5h3M1124 442.5h1M918 443.5h2M1125 443.5h1M920 444.5h3M1126 444.5h1M923 445.5h3M1126 445.5h1M926 446.5h2M1127 446.5h1M928 447.5h3M1128 447.5h1M931 448.5h2M1128 448.5h1M933 449.5h3M1128 449.5h1M936 450.5h3M1128 450.5h1M939 451.5h2M1128 451.5h1M941 452.5h3M1129 452.5h1M944 453.5h3M1129 453.5h1M947 454.5h2M1129 454.5h1M949 455.5h3M1129 455.5h1M952 456.5h2M1129 456.5h1M954 457.5h2M1129 457.5h1M956 458.5h1M1129 458.5h1M957 459.5h2M1129 459.5h1M959 460.5h1M1129 460.5h1M961 461.5h1M1128 461.5h1M962 462.5h2M1128 462.5h1M964 463.5h1M1128 463.5h1M965 464.5h1M966 465.5h2M1128 465.5h1M966 466.5h1M1127 466.5h1M966 467.5h1M1127 467.5h1M965 468.5h1M1127 468.5h1M964 469.5h1M1127 469.5h1M964 470.5h1M1126 470.5h1M1126 471.5h1M963 472.5h1M1126 472.5h1M962 473.5h1M1126 473.5h1M961 474.5h1M1125 474.5h1M961 475.5h1M1125 475.5h1M960 476.5h1M1126 476.5h2M959 477.5h1M1128 477.5h2M959 478.5h1M1130 478.5h1M958 479.5h1M1131 479.5h2M957 480.5h1M1134 480.5h1M957 481.5h1M1135 481.5h2M956 482.5h1M1137 482.5h2M955 483.5h1M1139 483.5h2M955 484.5h1M1141 484.5h2M954 485.5h1M1143 485.5h2M953 486.5h1M1145 486.5h2M953 487.5h1M1147 487.5h2M952 488.5h1M1149 488.5h1M951 489.5h1M1150 489.5h2M951 490.5h1M1152 490.5h2M950 491.5h1M1154 491.5h2M949 492.5h1M1156 492.5h2M949 493.5h1M1158 493.5h2M948 494.5h1M1160 494.5h2M947 495.5h1M1162 495.5h2M947 496.5h1M1164 496.5h1M946 497.5h1M1165 497.5h2M945 498.5h1M1167 498.5h2M945 499.5h1M1169 499.5h2M944 500.5h1M1171 500.5h1M943 501.5h1M1171 501.5h1M942 502.5h1M1170 502.5h1M942 503.5h1M1170 503.5h1M941 504.5h1M1170 504.5h1M940 505.5h1M1169 505.5h1M940 506.5h1M1169 506.5h1M939 507.5h1M1169 507.5h1M938 508.5h1M1168 508.5h1M938 509.5h1M1168 509.5h1M938 510.5h1M1167 510.5h1M937 511.5h1M1167 511.5h1M937 512.5h1M1167 512.5h1M936 513.5h1M1166 513.5h1M936 514.5h1M1166 514.5h1M936 515.5h1M1166 515.5h1M935 516.5h1M1165 516.5h1M935 517.5h1M1165 517.5h1M934 518.5h1M1165 518.5h1M934 519.5h1M1164 519.5h1M934 520.5h1M1164 520.5h1M933 521.5h1M1164 521.5h1M933 522.5h1M1163 522.5h1M932 523.5h1M1163 523.5h1M932 524.5h1M1162 524.5h1M932 525.5h1M1162 525.5h1M931 526.5h1M1162 526.5h1M931 527.5h1M1161 527.5h1M931 528.5h1M1161 528.5h1M930 529.5h1M1161 529.5h1M930 530.5h1M1160 530.5h1M929 531.5h1M1160 531.5h1M929 532.5h1M1160 532.5h1M929 533.5h1M1159 533.5h1M928 534.5h1M1159 534.5h1M928 535.5h1M1159 535.5h1M927 536.5h1M1158 536.5h1M927 537.5h1M1158 537.5h1M927 538.5h1M1158 538.5h1M926 539.5h1M1158 539.5h1M926 540.5h1M1157 540.5h1M1157 541.5h1M925 542.5h1M1157 542.5h1M925 543.5h1M1156 543.5h1M925 544.5h1M1156 544.5h1M924 545.5h1M1156 545.5h1M924 546.5h1M1156 546.5h1M923 547.5h1M1155 547.5h1M923 548.5h1M1155 548.5h1M923 549.5h1M1155 549.5h1M922 550.5h1M1155 550.5h1M922 551.5h1M1154 551.5h1M921 552.5h1M1154 552.5h1M921 553.5h1M1154 553.5h1M921 554.5h1M1154 554.5h1M920 555.5h1M1153 555.5h1M920 556.5h1M1153 556.5h1M919 557.5h1M1153 557.5h1M919 558.5h1M1153 558.5h1M919 559.5h1M1152 559.5h1M918 560.5h1M1152 560.5h1M918 561.5h1M1152 561.5h1M917 562.5h1M1152 562.5h1M917 563.5h1M1151 563.5h1M918 564.5h1M1151 564.5h1M918 565.5h1M1151 565.5h1M918 566.5h1M1151 566.5h1M919 567.5h1M1150 567.5h1M919 568.5h1M1150 568.5h1M920 569.5h1M1150 569.5h1M920 570.5h1M1150 570.5h1M921 571.5h1M1149 571.5h1M921 572.5h1M1149 572.5h1M921 573.5h1M1149 573.5h1M922 574.5h1M1149 574.5h1M922 575.5h1M1149 575.5h1M923 576.5h1M1148 576.5h1M923 577.5h1M1148 577.5h1M924 578.5h1M1148 578.5h1M924 579.5h1M1148 579.5h1M924 580.5h1M1148 580.5h1M925 581.5h1M1147 581.5h1M925 582.5h1M1147 582.5h1M926 583.5h1M1147 583.5h1M926 584.5h1M1147 584.5h1M927 585.5h1M1147 585.5h1M927 586.5h1M1147 586.5h1M928 587.5h1M1146 587.5h1M928 588.5h1M1146 588.5h1M928 589.5h1M1146 589.5h1M929 590.5h1M1146 590.5h1M929 591.5h1M1146 591.5h1M930 592.5h1M1145 592.5h1M930 593.5h1M1145 593.5h1M931 594.5h1M1145 594.5h1M931 595.5h1M1145 595.5h1M931 596.5h1M1145 596.5h1M932 597.5h1M1145 597.5h1M932 598.5h1M1144 598.5h1M933 599.5h1M1144 599.5h1M933 600.5h1M1144 600.5h1M934 601.5h1M1144 601.5h1M934 602.5h1M1144 602.5h1M934 603.5h1M1143 603.5h1M935 604.5h1M1143 604.5h1M935 605.5h1M1143 605.5h1M936 606.5h1M1143 606.5h1M936 607.5h1M1143 607.5h1M937 608.5h1M1143 608.5h1M937 609.5h1M1142 609.5h1M938 610.5h1M1142 610.5h1M938 611.5h1M1142 611.5h1M938 612.5h1M1142 612.5h1M939 613.5h1M1142 613.5h1M939 614.5h1M1141 614.5h1M940 615.5h1M1141 615.5h1M940 616.5h1M1141 616.5h1M941 617.5h1M1141 617.5h1M941 618.5h1M1141 618.5h1M941 619.5h1M1141 619.5h1M942 620.5h1M1140 620.5h1M942 621.5h1M1140 621.5h1M943 622.5h1M1140 622.5h1M943 623.5h1M1140 623.5h1M944 624.5h1M1140 624.5h1M944 625.5h1M1139 625.5h1M944 626.5h1M1139 626.5h1M945 627.5h1M1139 627.5h1M945 628.5h1M1139 628.5h1M946 629.5h1M1139 629.5h1M946 630.5h1M1138 630.5h1M947 631.5h1M1138 631.5h1M947 632.5h1M1138 632.5h1M947 633.5h1M1138 633.5h1M948 634.5h1M1138 634.5h1M948 635.5h1M1138 635.5h1M949 636.5h1M1137 636.5h1M949 637.5h1M1137 637.5h1M950 638.5h1M1137 638.5h1M1137 639.5h1M950 640.5h1M1137 640.5h1M951 641.5h1M1136 641.5h1M951 642.5h1M1136 642.5h1M951 643.5h1M1136 643.5h1M952 644.5h1M1136 644.5h1M952 645.5h1M1136 645.5h1M953 646.5h1M1136 646.5h1M953 647.5h1M1135 647.5h1M953 648.5h1M1135 648.5h1M954 649.5h1M1135 649.5h1M954 650.5h1M1135 650.5h1M955 651.5h1M1135 651.5h1M955 652.5h1M1134 652.5h1M956 653.5h1M1134 653.5h1M956 654.5h1M1134 654.5h1M956 655.5h1M1134 655.5h1M957 656.5h1M1134 656.5h1M957 657.5h1M1134 657.5h1M958 658.5h1M1133 658.5h1M958 659.5h1M1133 659.5h1M959 660.5h1M1133 660.5h1M959 661.5h1M1133 661.5h1M959 662.5h1M1133 662.5h1M960 663.5h1M1132 663.5h1M960 664.5h1M1132 664.5h1M961 665.5h1M1132 665.5h1M961 666.5h1M1132 666.5h1M961 667.5h1M1132 667.5h1M962 668.5h1M1132 668.5h1M962 669.5h1M1131 669.5h1M963 670.5h1M1131 670.5h1M963 671.5h1M1131 671.5h1M964 672.5h1M1131 672.5h1M964 673.5h1M1131 673.5h1M964 674.5h1M1130 674.5h1M965 675.5h1M1130 675.5h1M965 676.5h1M1130 676.5h1M966 677.5h1M1130 677.5h1M966 678.5h1M1130 678.5h1M967 679.5h1M1129 679.5h1M967 680.5h1M1129 680.5h1M967 681.5h1M1129 681.5h1M968 682.5h1M1129 682.5h1M968 683.5h1M1129 683.5h1M968 684.5h1M1129 684.5h1M969 685.5h1M1128 685.5h1M969 686.5h1M1128 686.5h1M969 687.5h1M1128 687.5h1M969 688.5h1M970 689.5h1M1128 689.5h1M970 690.5h1M1128 690.5h1M970 691.5h1M1127 691.5h1M970 692.5h1M1127 692.5h1M971 693.5h1M1127 693.5h1M971 694.5h1M1127 694.5h1M971 695.5h1M1127 695.5h1M971 696.5h1M1127 696.5h1M972 697.5h1M1126 697.5h1M972 698.5h1M1126 698.5h1M972 699.5h1M1126 699.5h1M972 700.5h1M1126 700.5h1M973 701.5h1M1126 701.5h1M973 702.5h1M1125 702.5h1M973 703.5h1M1125 703.5h1M973 704.5h1M1125 704.5h1M974 705.5h1M1125 705.5h1M974 706.5h1M1125 706.5h1M974 707.5h1M1125 707.5h1M974 708.5h1M1124 708.5h1M975 709.5h1M1124 709.5h1M975 710.5h1M1124 710.5h1M975 711.5h1M1124 711.5h1M975 712.5h1M1124 712.5h1M976 713.5h1M1123 713.5h1M976 714.5h1M1123 714.5h1M976 715.5h1M1123 715.5h1M977 716.5h1M1123 716.5h1M977 717.5h1M1123 717.5h1M977 718.5h1M1123 718.5h1M977 719.5h1M1122 719.5h1M978 720.5h1M1122 720.5h1M978 721.5h1M1122 721.5h1M978 722.5h1M1122 722.5h1M978 723.5h1M1122 723.5h1M979 724.5h1M1121 724.5h1M979 725.5h1M1121 725.5h1M979 726.5h1M1121 726.5h1M979 727.5h1M1121 727.5h1M980 728.5h1M1121 728.5h1M980 729.5h1M1120 729.5h1M980 730.5h1M1120 730.5h1M980 731.5h1M1120 731.5h1M981 732.5h1M1120 732.5h1M981 733.5h1M1120 733.5h1M981 734.5h1M1120 734.5h1M981 735.5h1M1119 735.5h1M982 736.5h1M1119 736.5h1M982 737.5h1M1119 737.5h1M982 738.5h1M1119 738.5h1M982 739.5h1M1119 739.5h1M983 740.5h1M1118 740.5h1M983 741.5h1M1118 741.5h1M983 742.5h1M1118 742.5h1M983 743.5h1M1118 743.5h1M984 744.5h1M1118 744.5h1M984 745.5h1M1118 745.5h1M984 746.5h1M1117 746.5h1M984 747.5h1M1117 747.5h1M985 748.5h1M1117 748.5h1M985 749.5h1M1116 749.5h1M985 750.5h1M1116 750.5h1M985 751.5h1M1115 751.5h1M986 752.5h1M1114 752.5h1M986 753.5h1M1114 753.5h1M986 754.5h1M1113 754.5h1M986 755.5h1M1113 755.5h1M987 756.5h1M1112 756.5h1M987 757.5h1M1111 757.5h1M987 758.5h1M1111 758.5h1M987 759.5h1M1110 759.5h1M988 760.5h1M1109 760.5h1M988 761.5h1M1109 761.5h1M988 762.5h1M1108 762.5h1M988 763.5h1M1108 763.5h1M989 764.5h1M1107 764.5h1M989 765.5h1M1106 765.5h1M989 766.5h1M1106 766.5h1M989 767.5h1M1105 767.5h1M990 768.5h1M1104 768.5h1M990 769.5h1M1104 769.5h1M990 770.5h1M1103 770.5h1M990 771.5h1M1102 771.5h1M991 772.5h1M1102 772.5h1M991 773.5h1M1101 773.5h1M991 774.5h1M1101 774.5h1M991 775.5h1M1100 775.5h1M992 776.5h1M1099 776.5h1M992 777.5h1M1099 777.5h1M992 778.5h1M1098 778.5h1M992 779.5h1M1097 779.5h1M993 780.5h1M1097 780.5h1M993 781.5h1M1096 781.5h1M993 782.5h1M1095 782.5h1M993 783.5h1M1095 783.5h1M994 784.5h1M1094 784.5h1M994 785.5h1M1094 785.5h1M994 786.5h1M1093 786.5h1M994 787.5h1M1092 787.5h1M995 788.5h1M1092 788.5h1M995 789.5h1M1091 789.5h1M995 790.5h1M1090 790.5h1M995 791.5h1M1090 791.5h1M996 792.5h1M1089 792.5h1M996 793.5h1M1089 793.5h1M996 794.5h1M1088 794.5h1M996 795.5h1M1087 795.5h1M997 796.5h1M1087 796.5h1M997 797.5h1M1086 797.5h1M997 798.5h1M1085 798.5h1M997 799.5h1M1085 799.5h1M998 800.5h1M1084 800.5h1M998 801.5h1M1083 801.5h1M998 802.5h1M1083 802.5h1M998 803.5h1M1082 803.5h1M999 804.5h1M1082 804.5h1M999 805.5h1M1081 805.5h1M999 806.5h1M1080 806.5h1M999 807.5h1M1080 807.5h1M1000 808.5h1M1079 808.5h1M1000 809.5h1M1078 809.5h1M1000 810.5h1M1078 810.5h1M1000 811.5h1M1077 811.5h1M1001 812.5h1M1076 812.5h1M1001 813.5h1M1076 813.5h1M1001 814.5h1M1075 814.5h1M1001 815.5h1M1074 815.5h1M1002 816.5h1M1074 816.5h1M1002 817.5h1M1073 817.5h1M1002 818.5h1M1072 818.5h1M1002 819.5h1M1072 819.5h1M1003 820.5h1M1071 820.5h1M1003 821.5h1M1003 822.5h1M1070 822.5h1M1003 823.5h1M1070 823.5h1M1004 824.5h1M1069 824.5h1M1004 825.5h1M1068 825.5h1M1004 826.5h1M1068 826.5h1M1004 827.5h1M1067 827.5h1M1005 828.5h1M1067 828.5h1M1005 829.5h1M1066 829.5h1M1005 830.5h1M1065 830.5h1M1005 831.5h1M1065 831.5h1M1006 832.5h1M1064 832.5h1M1006 833.5h1M1063 833.5h1M1006 834.5h1M1063 834.5h1M1006 835.5h1M1062 835.5h1M1007 836.5h1M1061 836.5h1M1007 837.5h1M1061 837.5h1M1007 838.5h1M1060 838.5h1M1007 839.5h1M1059 839.5h1M1008 840.5h1M1059 840.5h1M1008 841.5h1M1058 841.5h1M1008 842.5h1M1057 842.5h1M1008 843.5h1M1057 843.5h1M1009 844.5h1M1056 844.5h1M1009 845.5h1M1055 845.5h1M1009 846.5h1M1055 846.5h1M1009 847.5h1M1054 847.5h1M1010 848.5h1M1053 848.5h1M1010 849.5h1M1053 849.5h1M1010 850.5h1M1052 850.5h1M1010 851.5h1M1051 851.5h1M1011 852.5h1M1051 852.5h1M1011 853.5h1M1050 853.5h1M1011 854.5h1M1049 854.5h1M1011 855.5h1M1049 855.5h1M1012 856.5h1M1048 856.5h1M1012 857.5h1M1047 857.5h1M1012 858.5h1M1047 858.5h1M1012 859.5h1M1046 859.5h1M1013 860.5h1M1045 860.5h1M1013 861.5h1M1045 861.5h1M1013 862.5h1M1044 862.5h1M1014 863.5h1M1043 863.5h1M1014 864.5h1M1042 864.5h1M1014 865.5h1M1042 865.5h1M1014 866.5h1M1041 866.5h1M1015 867.5h1M1040 867.5h1M1015 868.5h1M1039 868.5h1M1015 869.5h1M1039 869.5h1M1015 870.5h1M1038 870.5h1M1016 871.5h1M1037 871.5h1M1016 872.5h1M1036 872.5h1M1016 873.5h1M1035 873.5h1M1016 874.5h1M1035 874.5h1M1017 875.5h1M1034 875.5h1M1017 876.5h1M1033 876.5h1M1017 877.5h1M1032 877.5h1M1017 878.5h1M1032 878.5h1M1018 879.5h1M1031 879.5h1M1018 880.5h1M1030 880.5h1M1018 881.5h1M1029 881.5h1M1018 882.5h1M1029 882.5h1M1019 883.5h1M1028 883.5h1M1019 884.5h1M1027 884.5h1M1019 885.5h1M1026 885.5h1M1019 886.5h1M1025 886.5h1M1020 887.5h1M1025 887.5h1M1020 888.5h1M1024 888.5h1M1020 889.5h1M1023 889.5h1M1020 890.5h1M1022 890.5h1M1021 891.5h2M1021 892.5h1" stroke="#f00" stroke-width="1" fill="none"/>
<path d="M485 261.5h73M521.5 225v73M509.5 249.5h24v24h-24z" fill="none" stroke="#000" stroke-width="1"/>
</svg>
</body></html>
